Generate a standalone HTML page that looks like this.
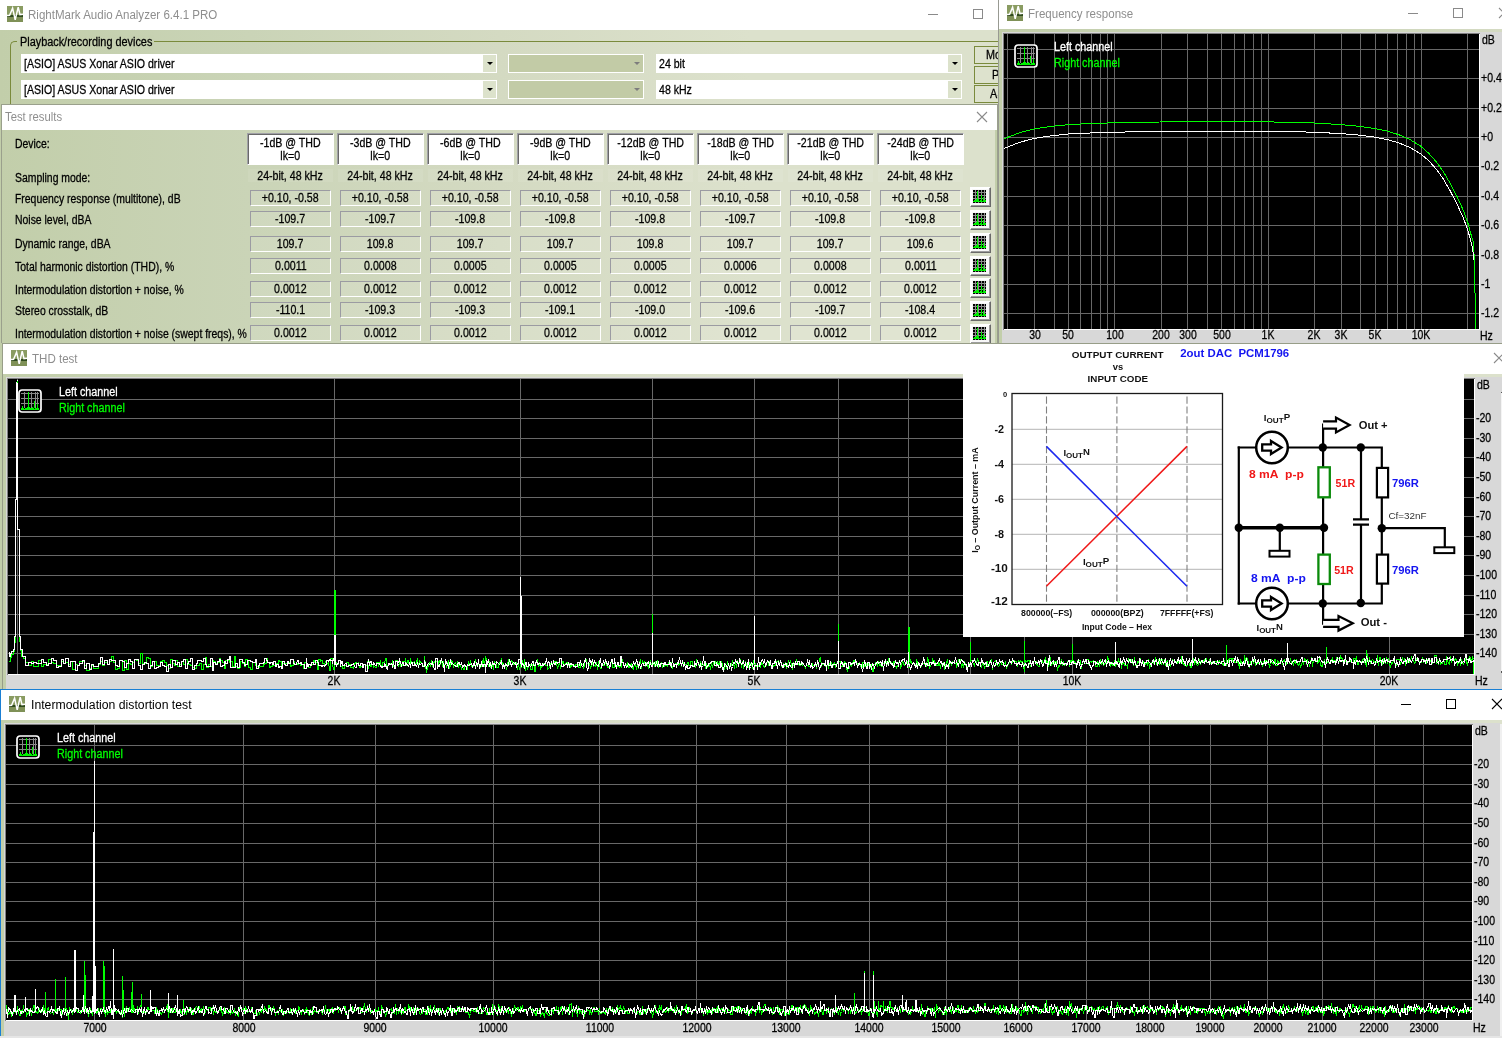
<!DOCTYPE html><html><head><meta charset="utf-8"><title>RightMark Audio Analyzer</title><style>
*{box-sizing:border-box}
html,body{margin:0;padding:0}
body{width:1502px;height:1038px;overflow:hidden;position:relative;background:#fff;
 font-family:"Liberation Sans",sans-serif;font-size:12px;color:#000}
.a{position:absolute}
.t,.tc,.hdr,.val,.smp,.cmb span,.btn{filter:brightness(1)}
.lbl,.pl,.lg,.gl,.hdr,.val,.smp,.cmb span,.btn{-webkit-text-stroke:0.28px currentColor}
.t{position:absolute;white-space:nowrap;line-height:14px;height:14px;transform-origin:0 50%}
.tc{position:absolute;white-space:nowrap;line-height:14px;height:14px;text-align:center}
.ttl{font-size:12px;color:#8e8e8e}
.gbg{background:linear-gradient(90deg,#c2ceaa 0,#cad4b7 250px,#d4dac2 500px,#dce1cc 750px,#dce1cc 100%)}
.hdr{position:absolute;background:#fff;border:1px solid;border-color:#a0a0a6 #fff #fff #a0a0a6;
 box-shadow:inset 1px 1px 0 #696969;text-align:center;line-height:12.5px;font-size:12px;padding-top:3px}
.val{position:absolute;border:1px solid;border-color:#9b9ba2 #fff #fff #9b9ba2;text-align:center;
 font-size:12px;line-height:14px;background:rgba(255,255,255,0.10)}
.smp{position:absolute;text-align:center;font-size:12px;line-height:14px;background:rgba(255,255,255,0.07)}
.gb{position:absolute;width:21px;height:20px;background:#f7f7f7;border:1px solid;border-color:#fff #6a6a6a #6a6a6a #fff;
 box-shadow:inset -1px -1px 0 #9d9d9d, inset 1px 1px 0 #fff}
.cmb{position:absolute;background:#fff;height:19px}
.cmb span{position:absolute;left:3px;top:3px;line-height:14px;white-space:nowrap;transform-origin:0 50%}
.arr{position:absolute;right:1px;top:1px;width:13px;height:17px;background:#dce2cb}
.arr:after{content:"";position:absolute;left:4px;top:7px;border:3px solid transparent;border-top:3px solid #000;border-bottom:none;width:0;height:0}
.btn span{display:inline-block;transform-origin:0 50%;transform:scaleX(0.9)}
.btn{position:absolute;border:1px solid #7a8a3c;background:#dde2cd;font-size:12px;line-height:16px}
.sx{display:inline-block;transform-origin:50% 50%;transform:scaleX(0.885)}
.lbl{transform:scaleX(0.868)}
.pl{transform:scaleX(0.875)}
.lg{transform:scaleX(0.897)}
.tc.pl{transform-origin:50% 50%;transform:scaleX(0.87)}
.ttl{transform:scaleX(0.962)}
.cmb span{transform:scaleX(0.881)}
</style></head><body>
<div class="a" style="left:0;top:0;width:998px;height:30px;background:#fff"></div>
<div class="a gbg" style="left:0;top:30px;width:998px;height:75px"></div>
<svg class="a" style="left:7px;top:6px" width="16" height="16" viewBox="0 0 16 16"><rect width="16" height="16" fill="#8a9c62"/><rect y="9" width="16" height="2.2" fill="#2f4a1c"/><rect y="11.2" width="16" height="4.8" fill="#7f9157"/><path d="M0,9.6 L2.6,9.3 L5.6,2.2 L8.2,13.8 L11.2,1.2 L13,8.6 L16,8.2" fill="none" stroke="#fff" stroke-width="1.5" stroke-linejoin="miter"/></svg>
<div class="t ttl" style="left:28px;top:8px;">RightMark Audio Analyzer 6.4.1 PRO</div>
<svg class="a" style="left:0;top:0" width="1502" height="1038" viewBox="0 0 1502 1038" shape-rendering="crispEdges"><rect x="928" y="14" width="10" height="1" fill="#8a8a8a"/><rect x="973.5" y="9.5" width="9" height="9" fill="none" stroke="#8a8a8a" stroke-width="1"/></svg>
<div class="a" style="left:10px;top:41px;width:1000px;height:80px;border:1px solid #7a8a3c;border-radius:5px 0 0 0;border-right:none;border-bottom:none"></div>
<div class="a" style="left:17px;top:35px;width:137px;height:14px;background:linear-gradient(90deg,#c3ceab,#c6d1b1)"></div>
<div class="t gl" style="left:19.5px;top:35px;transform:scaleX(0.906);">Playback/recording devices</div>
<div class="cmb" style="left:21px;top:54px;width:476px"><span>[ASIO] ASUS Xonar ASIO driver</span><div class="arr"></div></div>
<div class="a" style="left:508px;top:54px;width:136px;height:19px;background:#c2cba6;border:1px solid #fff"></div>
<div class="a" style="left:633.5px;top:62px;width:0;height:0;border:3px solid transparent;border-top:3px solid #7d7d7d;border-bottom:none"></div>
<div class="cmb" style="left:656px;top:54px;width:306px"><span>24 bit</span><div class="arr"></div></div>
<div class="cmb" style="left:21px;top:80px;width:476px"><span>[ASIO] ASUS Xonar ASIO driver</span><div class="arr"></div></div>
<div class="a" style="left:508px;top:80px;width:136px;height:19px;background:#c2cba6;border:1px solid #fff"></div>
<div class="a" style="left:633.5px;top:88px;width:0;height:0;border:3px solid transparent;border-top:3px solid #7d7d7d;border-bottom:none"></div>
<div class="cmb" style="left:656px;top:80px;width:306px"><span>48 kHz</span><div class="arr"></div></div>
<div class="a" style="left:974px;top:46px;width:24px;height:59px;overflow:hidden"><div class="btn" style="left:0;top:0;width:40px;height:18px"><span style="position:absolute;left:11px;top:0">Mo</span></div><div class="btn" style="left:0;top:20px;width:40px;height:18px"><span style="position:absolute;left:17px;top:0">P</span></div><div class="btn" style="left:0;top:39px;width:40px;height:18px"><span style="position:absolute;left:15px;top:0">AS</span></div></div>
<div class="a" style="left:1px;top:104px;width:997px;height:240px;background:#9aa08c"></div>
<div class="a" style="left:2px;top:105px;width:995px;height:25px;background:#fff"></div>
<div class="a gbg" style="left:2px;top:130px;width:995px;height:213px;background-position:-2px 0"></div>
<div class="a" style="left:0;top:104px;width:1px;height:240px;background:#c2ceaa"></div>
<div class="t ttl" style="left:5px;top:110px;transform:scaleX(0.94);">Test results</div>
<svg class="a" style="left:0;top:0" width="1502" height="1038" viewBox="0 0 1502 1038" shape-rendering="crispEdges"></svg>
<svg class="a" style="left:976px;top:111px" width="12" height="12" viewBox="0 0 12 12"><path d="M1,1 L11,11 M11,1 L1,11" stroke="#8a8a8a" stroke-width="1.1" fill="none"/></svg>
<div class="t lbl" style="left:14.5px;top:137px;">Device:</div>
<div class="t lbl" style="left:14.5px;top:171px;">Sampling mode:</div>
<div class="t lbl" style="left:14.5px;top:192px;">Frequency response (multitone), dB</div>
<div class="t lbl" style="left:14.5px;top:213px;">Noise level, dBA</div>
<div class="t lbl" style="left:14.5px;top:237px;">Dynamic range, dBA</div>
<div class="t lbl" style="left:14.5px;top:260px;">Total harmonic distortion (THD), %</div>
<div class="t lbl" style="left:14.5px;top:283px;">Intermodulation distortion + noise, %</div>
<div class="t lbl" style="left:14.5px;top:304px;">Stereo crosstalk, dB</div>
<div class="t lbl" style="left:14.5px;top:327px;">Intermodulation distortion + noise (swept freqs), %</div>
<div class="hdr" style="left:247px;top:133px;width:87px;height:32px"><span class="sx hs">-1dB @ THD</span><br><span class="sx hs">lk=0</span></div>
<div class="smp" style="left:248px;top:169px;width:85px;height:13px"><span class="sx ss">24-bit, 48 kHz</span></div>
<div class="val" style="left:250px;top:190px;width:81px;height:16px"><span class="sx vs">+0.10, -0.58</span></div>
<div class="val" style="left:250px;top:211px;width:81px;height:16px"><span class="sx vs">-109.7</span></div>
<div class="val" style="left:250px;top:236px;width:81px;height:16px"><span class="sx vs">109.7</span></div>
<div class="val" style="left:250px;top:258px;width:81px;height:16px"><span class="sx vs">0.0011</span></div>
<div class="val" style="left:250px;top:281px;width:81px;height:16px"><span class="sx vs">0.0012</span></div>
<div class="val" style="left:250px;top:302px;width:81px;height:16px"><span class="sx vs">-110.1</span></div>
<div class="val" style="left:250px;top:325px;width:81px;height:16px"><span class="sx vs">0.0012</span></div>
<div class="hdr" style="left:337px;top:133px;width:87px;height:32px"><span class="sx hs">-3dB @ THD</span><br><span class="sx hs">lk=0</span></div>
<div class="smp" style="left:338px;top:169px;width:85px;height:13px"><span class="sx ss">24-bit, 48 kHz</span></div>
<div class="val" style="left:340px;top:190px;width:81px;height:16px"><span class="sx vs">+0.10, -0.58</span></div>
<div class="val" style="left:340px;top:211px;width:81px;height:16px"><span class="sx vs">-109.7</span></div>
<div class="val" style="left:340px;top:236px;width:81px;height:16px"><span class="sx vs">109.8</span></div>
<div class="val" style="left:340px;top:258px;width:81px;height:16px"><span class="sx vs">0.0008</span></div>
<div class="val" style="left:340px;top:281px;width:81px;height:16px"><span class="sx vs">0.0012</span></div>
<div class="val" style="left:340px;top:302px;width:81px;height:16px"><span class="sx vs">-109.3</span></div>
<div class="val" style="left:340px;top:325px;width:81px;height:16px"><span class="sx vs">0.0012</span></div>
<div class="hdr" style="left:427px;top:133px;width:87px;height:32px"><span class="sx hs">-6dB @ THD</span><br><span class="sx hs">lk=0</span></div>
<div class="smp" style="left:428px;top:169px;width:85px;height:13px"><span class="sx ss">24-bit, 48 kHz</span></div>
<div class="val" style="left:430px;top:190px;width:81px;height:16px"><span class="sx vs">+0.10, -0.58</span></div>
<div class="val" style="left:430px;top:211px;width:81px;height:16px"><span class="sx vs">-109.8</span></div>
<div class="val" style="left:430px;top:236px;width:81px;height:16px"><span class="sx vs">109.7</span></div>
<div class="val" style="left:430px;top:258px;width:81px;height:16px"><span class="sx vs">0.0005</span></div>
<div class="val" style="left:430px;top:281px;width:81px;height:16px"><span class="sx vs">0.0012</span></div>
<div class="val" style="left:430px;top:302px;width:81px;height:16px"><span class="sx vs">-109.3</span></div>
<div class="val" style="left:430px;top:325px;width:81px;height:16px"><span class="sx vs">0.0012</span></div>
<div class="hdr" style="left:517px;top:133px;width:87px;height:32px"><span class="sx hs">-9dB @ THD</span><br><span class="sx hs">lk=0</span></div>
<div class="smp" style="left:518px;top:169px;width:85px;height:13px"><span class="sx ss">24-bit, 48 kHz</span></div>
<div class="val" style="left:520px;top:190px;width:81px;height:16px"><span class="sx vs">+0.10, -0.58</span></div>
<div class="val" style="left:520px;top:211px;width:81px;height:16px"><span class="sx vs">-109.8</span></div>
<div class="val" style="left:520px;top:236px;width:81px;height:16px"><span class="sx vs">109.7</span></div>
<div class="val" style="left:520px;top:258px;width:81px;height:16px"><span class="sx vs">0.0005</span></div>
<div class="val" style="left:520px;top:281px;width:81px;height:16px"><span class="sx vs">0.0012</span></div>
<div class="val" style="left:520px;top:302px;width:81px;height:16px"><span class="sx vs">-109.1</span></div>
<div class="val" style="left:520px;top:325px;width:81px;height:16px"><span class="sx vs">0.0012</span></div>
<div class="hdr" style="left:607px;top:133px;width:87px;height:32px"><span class="sx hs">-12dB @ THD</span><br><span class="sx hs">lk=0</span></div>
<div class="smp" style="left:608px;top:169px;width:85px;height:13px"><span class="sx ss">24-bit, 48 kHz</span></div>
<div class="val" style="left:610px;top:190px;width:81px;height:16px"><span class="sx vs">+0.10, -0.58</span></div>
<div class="val" style="left:610px;top:211px;width:81px;height:16px"><span class="sx vs">-109.8</span></div>
<div class="val" style="left:610px;top:236px;width:81px;height:16px"><span class="sx vs">109.8</span></div>
<div class="val" style="left:610px;top:258px;width:81px;height:16px"><span class="sx vs">0.0005</span></div>
<div class="val" style="left:610px;top:281px;width:81px;height:16px"><span class="sx vs">0.0012</span></div>
<div class="val" style="left:610px;top:302px;width:81px;height:16px"><span class="sx vs">-109.0</span></div>
<div class="val" style="left:610px;top:325px;width:81px;height:16px"><span class="sx vs">0.0012</span></div>
<div class="hdr" style="left:697px;top:133px;width:87px;height:32px"><span class="sx hs">-18dB @ THD</span><br><span class="sx hs">lk=0</span></div>
<div class="smp" style="left:698px;top:169px;width:85px;height:13px"><span class="sx ss">24-bit, 48 kHz</span></div>
<div class="val" style="left:700px;top:190px;width:81px;height:16px"><span class="sx vs">+0.10, -0.58</span></div>
<div class="val" style="left:700px;top:211px;width:81px;height:16px"><span class="sx vs">-109.7</span></div>
<div class="val" style="left:700px;top:236px;width:81px;height:16px"><span class="sx vs">109.7</span></div>
<div class="val" style="left:700px;top:258px;width:81px;height:16px"><span class="sx vs">0.0006</span></div>
<div class="val" style="left:700px;top:281px;width:81px;height:16px"><span class="sx vs">0.0012</span></div>
<div class="val" style="left:700px;top:302px;width:81px;height:16px"><span class="sx vs">-109.6</span></div>
<div class="val" style="left:700px;top:325px;width:81px;height:16px"><span class="sx vs">0.0012</span></div>
<div class="hdr" style="left:787px;top:133px;width:87px;height:32px"><span class="sx hs">-21dB @ THD</span><br><span class="sx hs">lk=0</span></div>
<div class="smp" style="left:788px;top:169px;width:85px;height:13px"><span class="sx ss">24-bit, 48 kHz</span></div>
<div class="val" style="left:790px;top:190px;width:81px;height:16px"><span class="sx vs">+0.10, -0.58</span></div>
<div class="val" style="left:790px;top:211px;width:81px;height:16px"><span class="sx vs">-109.8</span></div>
<div class="val" style="left:790px;top:236px;width:81px;height:16px"><span class="sx vs">109.7</span></div>
<div class="val" style="left:790px;top:258px;width:81px;height:16px"><span class="sx vs">0.0008</span></div>
<div class="val" style="left:790px;top:281px;width:81px;height:16px"><span class="sx vs">0.0012</span></div>
<div class="val" style="left:790px;top:302px;width:81px;height:16px"><span class="sx vs">-109.7</span></div>
<div class="val" style="left:790px;top:325px;width:81px;height:16px"><span class="sx vs">0.0012</span></div>
<div class="hdr" style="left:877px;top:133px;width:87px;height:32px"><span class="sx hs">-24dB @ THD</span><br><span class="sx hs">lk=0</span></div>
<div class="smp" style="left:878px;top:169px;width:85px;height:13px"><span class="sx ss">24-bit, 48 kHz</span></div>
<div class="val" style="left:880px;top:190px;width:81px;height:16px"><span class="sx vs">+0.10, -0.58</span></div>
<div class="val" style="left:880px;top:211px;width:81px;height:16px"><span class="sx vs">-109.8</span></div>
<div class="val" style="left:880px;top:236px;width:81px;height:16px"><span class="sx vs">109.6</span></div>
<div class="val" style="left:880px;top:258px;width:81px;height:16px"><span class="sx vs">0.0011</span></div>
<div class="val" style="left:880px;top:281px;width:81px;height:16px"><span class="sx vs">0.0012</span></div>
<div class="val" style="left:880px;top:302px;width:81px;height:16px"><span class="sx vs">-108.4</span></div>
<div class="val" style="left:880px;top:325px;width:81px;height:16px"><span class="sx vs">0.0012</span></div>
<div class="gb" style="left:970px;top:187px"><svg class="a" style="left:2px;top:2px" width="13" height="13" viewBox="0 0 13 13" shape-rendering="crispEdges"><rect width="13" height="13" fill="#000"/><path d="M0,2.5H13M0,5.5H13M0,8.5H13M2.5,0V13M5.5,0V13M8.5,0V13M11.5,0V13" stroke="#8e8e8e" stroke-width="1"/><path d="M0,11.5H13M1,10.5H3M4.5,1V12M3.5,9V11M5.5,9V11M8.5,5V12M7.5,10V11M10.5,7V12M11,10.5H13" stroke="#00ee00" stroke-width="1"/></svg></div>
<div class="gb" style="left:970px;top:210px"><svg class="a" style="left:2px;top:2px" width="13" height="13" viewBox="0 0 13 13" shape-rendering="crispEdges"><rect width="13" height="13" fill="#000"/><path d="M0,2.5H13M0,5.5H13M0,8.5H13M2.5,0V13M5.5,0V13M8.5,0V13M11.5,0V13" stroke="#8e8e8e" stroke-width="1"/><path d="M0,11.5H13M1,10.5H3M4.5,1V12M3.5,9V11M5.5,9V11M8.5,5V12M7.5,10V11M10.5,7V12M11,10.5H13" stroke="#00ee00" stroke-width="1"/></svg></div>
<div class="gb" style="left:970px;top:233px"><svg class="a" style="left:2px;top:2px" width="13" height="13" viewBox="0 0 13 13" shape-rendering="crispEdges"><rect width="13" height="13" fill="#000"/><path d="M0,2.5H13M0,5.5H13M0,8.5H13M2.5,0V13M5.5,0V13M8.5,0V13M11.5,0V13" stroke="#8e8e8e" stroke-width="1"/><path d="M0,11.5H13M1,10.5H3M4.5,1V12M3.5,9V11M5.5,9V11M8.5,5V12M7.5,10V11M10.5,7V12M11,10.5H13" stroke="#00ee00" stroke-width="1"/></svg></div>
<div class="gb" style="left:970px;top:256px"><svg class="a" style="left:2px;top:2px" width="13" height="13" viewBox="0 0 13 13" shape-rendering="crispEdges"><rect width="13" height="13" fill="#000"/><path d="M0,2.5H13M0,5.5H13M0,8.5H13M2.5,0V13M5.5,0V13M8.5,0V13M11.5,0V13" stroke="#8e8e8e" stroke-width="1"/><path d="M0,11.5H13M1,10.5H3M4.5,1V12M3.5,9V11M5.5,9V11M8.5,5V12M7.5,10V11M10.5,7V12M11,10.5H13" stroke="#00ee00" stroke-width="1"/></svg></div>
<div class="gb" style="left:970px;top:278px"><svg class="a" style="left:2px;top:2px" width="13" height="13" viewBox="0 0 13 13" shape-rendering="crispEdges"><rect width="13" height="13" fill="#000"/><path d="M0,2.5H13M0,5.5H13M0,8.5H13M2.5,0V13M5.5,0V13M8.5,0V13M11.5,0V13" stroke="#8e8e8e" stroke-width="1"/><path d="M0,11.5H13M1,10.5H3M4.5,1V12M3.5,9V11M5.5,9V11M8.5,5V12M7.5,10V11M10.5,7V12M11,10.5H13" stroke="#00ee00" stroke-width="1"/></svg></div>
<div class="gb" style="left:970px;top:301px"><svg class="a" style="left:2px;top:2px" width="13" height="13" viewBox="0 0 13 13" shape-rendering="crispEdges"><rect width="13" height="13" fill="#000"/><path d="M0,2.5H13M0,5.5H13M0,8.5H13M2.5,0V13M5.5,0V13M8.5,0V13M11.5,0V13" stroke="#8e8e8e" stroke-width="1"/><path d="M0,11.5H13M1,10.5H3M4.5,1V12M3.5,9V11M5.5,9V11M8.5,5V12M7.5,10V11M10.5,7V12M11,10.5H13" stroke="#00ee00" stroke-width="1"/></svg></div>
<div class="gb" style="left:970px;top:324px"><svg class="a" style="left:2px;top:2px" width="13" height="13" viewBox="0 0 13 13" shape-rendering="crispEdges"><rect width="13" height="13" fill="#000"/><path d="M0,2.5H13M0,5.5H13M0,8.5H13M2.5,0V13M5.5,0V13M8.5,0V13M11.5,0V13" stroke="#8e8e8e" stroke-width="1"/><path d="M0,11.5H13M1,10.5H3M4.5,1V12M3.5,9V11M5.5,9V11M8.5,5V12M7.5,10V11M10.5,7V12M11,10.5H13" stroke="#00ee00" stroke-width="1"/></svg></div>
<div class="a gbg" style="left:999px;top:0;width:503px;height:345px"></div>
<div class="a" style="left:998px;top:0;width:1px;height:345px;background:#989a92"></div>
<div class="a" style="left:999px;top:0;width:503px;height:29px;background:#fff"></div>
<svg class="a" style="left:1007px;top:5px" width="16" height="16" viewBox="0 0 16 16"><rect width="16" height="16" fill="#8a9c62"/><rect y="9" width="16" height="2.2" fill="#2f4a1c"/><rect y="11.2" width="16" height="4.8" fill="#7f9157"/><path d="M0,9.6 L2.6,9.3 L5.6,2.2 L8.2,13.8 L11.2,1.2 L13,8.6 L16,8.2" fill="none" stroke="#fff" stroke-width="1.5" stroke-linejoin="miter"/></svg>
<div class="t ttl" style="left:1028px;top:7px;">Frequency response</div>
<svg class="a" style="left:0;top:0" width="1502" height="1038" viewBox="0 0 1502 1038" shape-rendering="crispEdges"><rect x="1408" y="13" width="10" height="1" fill="#8a8a8a"/><rect x="1453.5" y="8.5" width="9" height="9" fill="none" stroke="#8a8a8a" stroke-width="1"/></svg>
<svg class="a" style="left:1498px;top:7px" width="12" height="12" viewBox="0 0 12 12"><path d="M1,1 L11,11 M11,1 L1,11" stroke="#8a8a8a" stroke-width="1.1" fill="none"/></svg>
<div class="a" style="left:1002px;top:32px;width:500px;height:312px;background:#d8d8d8"></div>
<div class="a" style="left:1003px;top:33px;width:477px;height:297px;background:#fff;border-left:1px solid #808080;border-top:1px solid #808080"></div>
<div class="a" style="left:998px;top:343px;width:504px;height:1px;background:#9b9b9b"></div>
<svg class="a" style="left:1004px;top:34px" width="475" height="295" viewBox="1004 34 475 295" ><rect x="1004" y="34" width="475" height="295" fill="#000"/><g stroke="#686868" stroke-width="1" shape-rendering="crispEdges"><line x1="1007.5" y1="34" x2="1007.5" y2="329"/><line x1="1034.5" y1="34" x2="1034.5" y2="329"/><line x1="1054.5" y1="34" x2="1054.5" y2="329"/><line x1="1068.5" y1="34" x2="1068.5" y2="329"/><line x1="1080.5" y1="34" x2="1080.5" y2="329"/><line x1="1091.5" y1="34" x2="1091.5" y2="329"/><line x1="1100.5" y1="34" x2="1100.5" y2="329"/><line x1="1107.5" y1="34" x2="1107.5" y2="329"/><line x1="1114.5" y1="34" x2="1114.5" y2="329"/><line x1="1161.5" y1="34" x2="1161.5" y2="329"/><line x1="1187.5" y1="34" x2="1187.5" y2="329"/><line x1="1207.5" y1="34" x2="1207.5" y2="329"/><line x1="1221.5" y1="34" x2="1221.5" y2="329"/><line x1="1234.5" y1="34" x2="1234.5" y2="329"/><line x1="1244.5" y1="34" x2="1244.5" y2="329"/><line x1="1253.5" y1="34" x2="1253.5" y2="329"/><line x1="1261.5" y1="34" x2="1261.5" y2="329"/><line x1="1268.5" y1="34" x2="1268.5" y2="329"/><line x1="1314.5" y1="34" x2="1314.5" y2="329"/><line x1="1341.5" y1="34" x2="1341.5" y2="329"/><line x1="1360.5" y1="34" x2="1360.5" y2="329"/><line x1="1375.5" y1="34" x2="1375.5" y2="329"/><line x1="1387.5" y1="34" x2="1387.5" y2="329"/><line x1="1397.5" y1="34" x2="1397.5" y2="329"/><line x1="1406.5" y1="34" x2="1406.5" y2="329"/><line x1="1414.5" y1="34" x2="1414.5" y2="329"/><line x1="1421.5" y1="34" x2="1421.5" y2="329"/><line x1="1467.5" y1="34" x2="1467.5" y2="329"/><line x1="1004" y1="49.5" x2="1479" y2="49.5"/><line x1="1004" y1="78.5" x2="1479" y2="78.5"/><line x1="1004" y1="108.5" x2="1479" y2="108.5"/><line x1="1004" y1="137.5" x2="1479" y2="137.5"/><line x1="1004" y1="166.5" x2="1479" y2="166.5"/><line x1="1004" y1="196.5" x2="1479" y2="196.5"/><line x1="1004" y1="225.5" x2="1479" y2="225.5"/><line x1="1004" y1="255.5" x2="1479" y2="255.5"/><line x1="1004" y1="284.5" x2="1479" y2="284.5"/><line x1="1004" y1="313.5" x2="1479" y2="313.5"/></g><polyline points="1004.0,139.0 1010.0,136.4 1020.0,132.6 1034.0,128.9 1050.0,126.5 1068.0,124.7 1090.0,123.5 1114.0,122.8 1140.0,122.3 1160.0,122.0 1200.0,121.9 1268.0,121.9 1290.0,122.3 1314.0,123.0 1341.0,124.6 1360.0,126.4 1375.0,128.6 1388.0,131.3 1399.0,134.8 1410.0,139.6 1421.0,146.4 1429.0,153.6 1436.5,162.0 1443.0,171.2 1450.0,183.0 1457.0,196.5 1463.8,211.5 1468.0,223.5 1470.6,233.0 1473.2,242.0 1474.0,254.0 1474.6,275.0 1475.2,300.0 1475.5,329.0" fill="none" stroke="#00ff00" stroke-width="1" shape-rendering="crispEdges"/><polyline points="1004.0,148.6 1010.0,146.0 1020.0,142.2 1034.3,138.4 1050.0,136.0 1068.4,134.0 1090.0,133.0 1114.4,132.3 1140.0,131.6 1160.4,131.3 1200.0,131.2 1267.8,131.2 1290.0,131.6 1313.8,132.2 1341.0,133.6 1360.0,135.2 1375.0,137.2 1388.0,139.8 1399.0,143.0 1410.0,147.5 1421.0,154.0 1429.0,161.0 1436.5,169.4 1443.0,178.5 1450.0,190.5 1457.0,204.0 1463.8,219.0 1468.0,231.0 1470.6,240.0 1472.6,248.0 1473.8,260.0" fill="none" stroke="#fff" stroke-width="1" shape-rendering="crispEdges"/></svg>
<svg class="a" style="left:1014px;top:44px" width="24" height="24" viewBox="0 0 24 24"><rect x="1" y="1" width="22" height="22" rx="3" fill="#000" stroke="#fff" stroke-width="1.7"/><g shape-rendering="crispEdges"><path d="M3,4.5H21M3,9.5H21M3,14.5H21M6.5,3V19M13.5,3V19M17.5,3V19M19.5,3V15" stroke="#8a8a8a" stroke-width="1"/><path d="M10.5,3V19M16.5,12V19M19.5,15V19" stroke="#00f400" stroke-width="1.2"/><path d="M3,21 V19 H4 V17 H5 V19 H6 V20 H7 V19 H9 V17.5 H12 V19 H14 V18 H15 V19 H16 V20 H17 V19 H21 V21 Z" fill="#00f400"/></g></svg>
<div class="t lg" style="left:1054px;top:40px;color:#fff;font-size:12px;">Left channel</div>
<div class="t lg" style="left:1054px;top:56px;color:#00ff00;font-size:12px;">Right channel</div>
<div class="t pl" style="left:1481.6px;top:33px;font-size:12px;">dB</div>
<div class="t pl" style="left:1480.5px;top:71.0px;font-size:12px;">+0.4</div>
<div class="t pl" style="left:1480.5px;top:101.0px;font-size:12px;">+0.2</div>
<div class="t pl" style="left:1480.5px;top:130.0px;font-size:12px;">+0</div>
<div class="t pl" style="left:1480.5px;top:159.0px;font-size:12px;">-0.2</div>
<div class="t pl" style="left:1480.5px;top:189.0px;font-size:12px;">-0.4</div>
<div class="t pl" style="left:1480.5px;top:218.0px;font-size:12px;">-0.6</div>
<div class="t pl" style="left:1480.5px;top:248.0px;font-size:12px;">-0.8</div>
<div class="t pl" style="left:1480.5px;top:277.0px;font-size:12px;">-1</div>
<div class="t pl" style="left:1480.5px;top:306.0px;font-size:12px;">-1.2</div>
<div class="tc pl" style="left:1004.5077216724858px;width:60px;top:328.3px;font-size:12px;">30</div>
<div class="tc pl" style="left:1038.4683282637577px;width:60px;top:328.3px;font-size:12px;">50</div>
<div class="tc pl" style="left:1084.55px;width:60px;top:328.3px;font-size:12px;">100</div>
<div class="tc pl" style="left:1130.6316717362422px;width:60px;top:328.3px;font-size:12px;">200</div>
<div class="tc pl" style="left:1157.587721672486px;width:60px;top:328.3px;font-size:12px;">300</div>
<div class="tc pl" style="left:1191.5483282637576px;width:60px;top:328.3px;font-size:12px;">500</div>
<div class="tc pl" style="left:1237.6299999999999px;width:60px;top:328.3px;font-size:12px;">1K</div>
<div class="tc pl" style="left:1283.7116717362421px;width:60px;top:328.3px;font-size:12px;">2K</div>
<div class="tc pl" style="left:1310.6677216724859px;width:60px;top:328.3px;font-size:12px;">3K</div>
<div class="tc pl" style="left:1344.6283282637578px;width:60px;top:328.3px;font-size:12px;">5K</div>
<div class="tc pl" style="left:1390.71px;width:60px;top:328.3px;font-size:12px;">10K</div>
<div class="t pl" style="left:1479.5px;top:329px;font-size:12px;">Hz</div>
<div class="a" style="left:0;top:343px;width:2px;height:346px;background:#c2ceaa"></div>
<div class="a" style="left:2px;top:343px;width:1500px;height:346px;background:#979d88"></div>
<div class="a" style="left:3px;top:344px;width:1499px;height:345px;background:linear-gradient(90deg,#c2ceaa 0,#cad4b7 250px,#d4dac2 500px,#dce1cc 750px,#dce1cc 100%)"></div>
<div class="a" style="left:3px;top:344px;width:1499px;height:30px;background:#fff"></div>
<svg class="a" style="left:11px;top:350px" width="16" height="16" viewBox="0 0 16 16"><rect width="16" height="16" fill="#8a9c62"/><rect y="9" width="16" height="2.2" fill="#2f4a1c"/><rect y="11.2" width="16" height="4.8" fill="#7f9157"/><path d="M0,9.6 L2.6,9.3 L5.6,2.2 L8.2,13.8 L11.2,1.2 L13,8.6 L16,8.2" fill="none" stroke="#fff" stroke-width="1.5" stroke-linejoin="miter"/></svg>
<div class="t ttl" style="left:32px;top:351.5px;">THD test</div>
<svg class="a" style="left:0;top:0" width="1502" height="1038" viewBox="0 0 1502 1038" shape-rendering="crispEdges"></svg>
<svg class="a" style="left:1493px;top:352px" width="12" height="12" viewBox="0 0 12 12"><path d="M1,1 L11,11 M11,1 L1,11" stroke="#8a8a8a" stroke-width="1.1" fill="none"/></svg>
<div class="a" style="left:6px;top:377px;width:1496px;height:312px;background:#d8d8d8"></div>
<div class="a" style="left:7px;top:378px;width:1468px;height:297px;background:#fff;border-left:1px solid #808080;border-top:1px solid #808080"></div>
<svg class="a" style="left:8px;top:379px" width="1466" height="295" viewBox="8 379 1466 295" ><rect x="8" y="379" width="1466" height="295" fill="#000"/><g stroke="#686868" stroke-width="1" shape-rendering="crispEdges"><line x1="17.5" y1="379" x2="17.5" y2="674"/><line x1="334.5" y1="379" x2="334.5" y2="674"/><line x1="520.5" y1="379" x2="520.5" y2="674"/><line x1="652.5" y1="379" x2="652.5" y2="674"/><line x1="754.5" y1="379" x2="754.5" y2="674"/><line x1="838.5" y1="379" x2="838.5" y2="674"/><line x1="908.5" y1="379" x2="908.5" y2="674"/><line x1="970.5" y1="379" x2="970.5" y2="674"/><line x1="1024.5" y1="379" x2="1024.5" y2="674"/><line x1="1072.5" y1="379" x2="1072.5" y2="674"/><line x1="1389.5" y1="379" x2="1389.5" y2="674"/><line x1="8" y1="399.5" x2="1474" y2="399.5"/><line x1="8" y1="418.5" x2="1474" y2="418.5"/><line x1="8" y1="438.5" x2="1474" y2="438.5"/><line x1="8" y1="457.5" x2="1474" y2="457.5"/><line x1="8" y1="477.5" x2="1474" y2="477.5"/><line x1="8" y1="497.5" x2="1474" y2="497.5"/><line x1="8" y1="516.5" x2="1474" y2="516.5"/><line x1="8" y1="536.5" x2="1474" y2="536.5"/><line x1="8" y1="555.5" x2="1474" y2="555.5"/><line x1="8" y1="575.5" x2="1474" y2="575.5"/><line x1="8" y1="595.5" x2="1474" y2="595.5"/><line x1="8" y1="614.5" x2="1474" y2="614.5"/><line x1="8" y1="634.5" x2="1474" y2="634.5"/><line x1="8" y1="653.5" x2="1474" y2="653.5"/></g><g fill="none" shape-rendering="crispEdges"><path d="M8.5,661.5H9.5H10.5V657.5H11.5V654.5H13.5V651.5H14.5V642.5H15.5V636.5" stroke="#00ff00" stroke-width="1"/><path d="M19.5,636.5V641.5H20.5V650.5H21.5V656.5H23.5V658.5" stroke="#00ff00" stroke-width="1"/><path d="M22.5,658.5H25.5V662.5H28.5V665.5H31.5V661.5H33.5V666.5H38.5V660.5H41.5V666.5H43.5V664.5H48.5V659.5H51.5V662.5H53.5V663.5H56.5V665.5H61.5V661.5H63.5V663.5H65.5V662.5H68.5V664.5H70.5V661.5H72.5V669.5H75.5V664.5H77.5V665.5H79.5V661.5H84.5V665.5H86.5V670.5H89.5V668.5H91.5V665.5H93.5V668.5H98.5V664.5H100.5V661.5H102.5V665.5H104.5V662.5H107.5V664.5H109.5V661.5H111.5V656.5H113.5V662.5H115.5V669.5H117.5V668.5H119.5V660.5H122.5V670.5H124.5V660.5H126.5V669.5H128.5V663.5H130.5V664.5H132.5V662.5H134.5V659.5H136.5V660.5H138.5V663.5H140.5V653.5H142.5V663.5H146.5V657.5H148.5V658.5H150.5V666.5H152.5V661.5H156.5V665.5H160.5V661.5H162.5V660.5H164.5V662.5H166.5V665.5H168.5V668.5H170.5V659.5H172.5V663.5H174.5V665.5H175.5V660.5H177.5V666.5H179.5V664.5H181.5V661.5H183.5V664.5H185.5V659.5H187.5V663.5H188.5V664.5H190.5V665.5H192.5V667.5H194.5V668.5H196.5V665.5H199.5V663.5H201.5V669.5H203.5V664.5H205.5V657.5H206.5V667.5H208.5V664.5H210.5V666.5H212.5V660.5H213.5V661.5H215.5V663.5H217.5V662.5H219.5V658.5H220.5V660.5H222.5V662.5H224.5V668.5H225.5V660.5H229.5V662.5H230.5V661.5H232.5V666.5H234.5V656.5H235.5V666.5H237.5V668.5H239.5V667.5H240.5V661.5H242.5V663.5H244.5V666.5H245.5V659.5H247.5V661.5H248.5V667.5H250.5V669.5H252.5V662.5H255.5V665.5H256.5V666.5H258.5V667.5H259.5V666.5H263.5V664.5H264.5V663.5H266.5V658.5H267.5V662.5H269.5V667.5H270.5V666.5H272.5V662.5H273.5V665.5H275.5V664.5H276.5V663.5H278.5V660.5H279.5V661.5H281.5V668.5H282.5V663.5H287.5V662.5H290.5V666.5H291.5V665.5H293.5V661.5H294.5V664.5H296.5V662.5L297.5,664.5H298.5V663.5H300.5V665.5H301.5V664.5H303.5V668.5H304.5V662.5H306.5V664.5L307.5,665.5H308.5V667.5H310.5V665.5H311.5V664.5H313.5V660.5H314.5V662.5H317.5V669.5H318.5V659.5H320.5V661.5L321.5,660.5H322.5V663.5H324.5V664.5L325.5,661.5H326.5V663.5H328.5V661.5L329.5,670.5H330.5V658.5H332.5V664.5L333.5,669.5H334.5V664.5H336.5V662.5L337.5,664.5H338.5V660.5H340.5V665.5L341.5,666.5H342.5V668.5H344.5V664.5L345.5,665.5H346.5V662.5H348.5V664.5H350.5V667.5H353.5V668.5L354.5,664.5L355.5,662.5H356.5V663.5H358.5V662.5L359.5,667.5H360.5V666.5H362.5V664.5L363.5,665.5L364.5,664.5H365.5V665.5H367.5V661.5L368.5,668.5L369.5,661.5L370.5,666.5H371.5V664.5H373.5V667.5L374.5,666.5L375.5,667.5H376.5V662.5H378.5V666.5L379.5,663.5L380.5,661.5L381.5,667.5H382.5V662.5H384.5V664.5L385.5,658.5H386.5V665.5H388.5V664.5H389.5V663.5H392.5V660.5L393.5,666.5L394.5,665.5H395.5V660.5H397.5V662.5L398.5,666.5L399.5,662.5L400.5,666.5L401.5,665.5H402.5V661.5H405.5V658.5L406.5,665.5L407.5,660.5H408.5V663.5H410.5V658.5L411.5,663.5H412.5V662.5H414.5V661.5L415.5,665.5L416.5,661.5L417.5,659.5L418.5,665.5L419.5,660.5L420.5,661.5L421.5,663.5H422.5V665.5H424.5V656.5L425.5,665.5L426.5,672.5L427.5,667.5L428.5,665.5L429.5,663.5L430.5,665.5L431.5,660.5L432.5,666.5L433.5,662.5H434.5V661.5H438.5V664.5L439.5,661.5L440.5,663.5L441.5,658.5L442.5,666.5L443.5,662.5L444.5,665.5L445.5,663.5L446.5,666.5L447.5,663.5L448.5,660.5L449.5,668.5L450.5,664.5L451.5,660.5L452.5,661.5L453.5,667.5L454.5,663.5L455.5,662.5L456.5,665.5L457.5,662.5L458.5,666.5L459.5,664.5L460.5,665.5L461.5,668.5L462.5,666.5L463.5,669.5H464.5V666.5H467.5V669.5L468.5,661.5L469.5,665.5L470.5,660.5L471.5,666.5L472.5,665.5L473.5,666.5L474.5,663.5L475.5,660.5L476.5,665.5H477.5V664.5H480.5V667.5L481.5,666.5L482.5,661.5L483.5,659.5L484.5,666.5L485.5,656.5L486.5,659.5L487.5,663.5L488.5,665.5L489.5,662.5L490.5,666.5L491.5,664.5L492.5,663.5L493.5,669.5L494.5,661.5L495.5,662.5H496.5V667.5H498.5V665.5L499.5,663.5L500.5,661.5L501.5,658.5L502.5,664.5L503.5,663.5L504.5,667.5L505.5,663.5L506.5,669.5L507.5,664.5L508.5,660.5L509.5,663.5L510.5,661.5L511.5,660.5L512.5,662.5L513.5,664.5H514.5V662.5H516.5V665.5L517.5,668.5L518.5,663.5L519.5,669.5L520.5,664.5L521.5,666.5L522.5,660.5L523.5,667.5L524.5,659.5L525.5,670.5L526.5,662.5L527.5,668.5L528.5,666.5L529.5,664.5H530.5V669.5H532.5V664.5H534.5V671.5H535.5V662.5H537.5V659.5L538.5,665.5L539.5,663.5L540.5,668.5L541.5,666.5H542.5V663.5H545.5V665.5H547.5V669.5L548.5,668.5L549.5,667.5L550.5,664.5L551.5,662.5L552.5,664.5L553.5,662.5H554.5V661.5H556.5V664.5L557.5,667.5L558.5,665.5L559.5,662.5L560.5,667.5L561.5,665.5L562.5,661.5H563.5V664.5H565.5V663.5L566.5,662.5H567.5V665.5H569.5V663.5L570.5,667.5L571.5,666.5L572.5,664.5H573.5V665.5H575.5V664.5H578.5V667.5H580.5V663.5H581.5V664.5H583.5V668.5L584.5,664.5L585.5,659.5H586.5V663.5H588.5V667.5L589.5,664.5L590.5,667.5L591.5,665.5L592.5,662.5L593.5,666.5L594.5,665.5L595.5,666.5L596.5,662.5L597.5,669.5L598.5,661.5L599.5,665.5L600.5,668.5H601.5V665.5H603.5V664.5L604.5,665.5L605.5,662.5L606.5,663.5L607.5,667.5H608.5V666.5H610.5V664.5L611.5,661.5H612.5V667.5H614.5V663.5L615.5,664.5L616.5,665.5H617.5V666.5H619.5V667.5L620.5,666.5L621.5,667.5L622.5,659.5L623.5,664.5L624.5,665.5L625.5,664.5L626.5,665.5L627.5,663.5L628.5,667.5H629.5V664.5H631.5V663.5L632.5,668.5L633.5,669.5L634.5,663.5L635.5,664.5L636.5,668.5L637.5,665.5L638.5,667.5L639.5,663.5L640.5,659.5L641.5,668.5L642.5,660.5L643.5,664.5L644.5,662.5L645.5,665.5L646.5,663.5L647.5,665.5L648.5,667.5L649.5,663.5L650.5,661.5L651.5,664.5L652.5,663.5L653.5,662.5L654.5,666.5L655.5,661.5L656.5,665.5L657.5,660.5L658.5,666.5L659.5,664.5L660.5,663.5L661.5,662.5L662.5,667.5L663.5,666.5H664.5V665.5H667.5V666.5L668.5,663.5L669.5,661.5L670.5,666.5L671.5,662.5L672.5,668.5L673.5,664.5L674.5,665.5L675.5,663.5H676.5V664.5H678.5V665.5L679.5,663.5L680.5,662.5L681.5,665.5L682.5,661.5L683.5,663.5L684.5,665.5L685.5,664.5L686.5,665.5L687.5,662.5H688.5V665.5H690.5V661.5H692.5V665.5L693.5,666.5L694.5,664.5L695.5,666.5L696.5,660.5L697.5,662.5L698.5,663.5L699.5,667.5L700.5,661.5L701.5,665.5L702.5,662.5L703.5,665.5L704.5,664.5L705.5,667.5L706.5,664.5L707.5,667.5L708.5,666.5L709.5,664.5L710.5,669.5L711.5,662.5L712.5,667.5L713.5,662.5L714.5,664.5L715.5,662.5L716.5,665.5L717.5,661.5L718.5,665.5L719.5,662.5L720.5,666.5L721.5,662.5L722.5,664.5L723.5,670.5L724.5,669.5L725.5,664.5L726.5,667.5L727.5,662.5L728.5,664.5L729.5,665.5L730.5,666.5L731.5,664.5L732.5,661.5L733.5,663.5L734.5,668.5L735.5,662.5L736.5,667.5L737.5,660.5L738.5,664.5L739.5,662.5L740.5,659.5L741.5,667.5L742.5,661.5L743.5,667.5L744.5,665.5L745.5,662.5L746.5,664.5L747.5,666.5L748.5,667.5L749.5,662.5L750.5,663.5L751.5,662.5L752.5,668.5L753.5,661.5L754.5,663.5H755.5V666.5H757.5V667.5L758.5,666.5L759.5,663.5L760.5,667.5L761.5,662.5L762.5,663.5L763.5,666.5L764.5,667.5L765.5,664.5L766.5,665.5L767.5,661.5L768.5,664.5L769.5,662.5L770.5,665.5L771.5,666.5L772.5,664.5L773.5,666.5L774.5,665.5H775.5V661.5H778.5V660.5L779.5,663.5L780.5,662.5H781.5V666.5H783.5V663.5L784.5,665.5L785.5,663.5L786.5,667.5L787.5,664.5L788.5,661.5L789.5,664.5L790.5,661.5L791.5,664.5L792.5,669.5L793.5,663.5L794.5,665.5L795.5,663.5L796.5,660.5L797.5,662.5L798.5,664.5L799.5,665.5H800.5V663.5H802.5V665.5L803.5,664.5L804.5,665.5L805.5,667.5L806.5,664.5L807.5,665.5H808.5V666.5H811.5V663.5H812.5V665.5H814.5V666.5L815.5,664.5L816.5,667.5L817.5,663.5L818.5,665.5L819.5,658.5L820.5,657.5L821.5,665.5L822.5,663.5H823.5V664.5H825.5V666.5L826.5,667.5L827.5,663.5L828.5,668.5L829.5,663.5L830.5,662.5H831.5V665.5H833.5V663.5L834.5,662.5L835.5,666.5L836.5,664.5L837.5,662.5H838.5V661.5H840.5V666.5H842.5V664.5L843.5,665.5L844.5,661.5L845.5,662.5L846.5,667.5L847.5,671.5L848.5,662.5L849.5,668.5L850.5,663.5L851.5,665.5L852.5,663.5L853.5,660.5H854.5V661.5H856.5V662.5L857.5,664.5L858.5,665.5L859.5,663.5L860.5,666.5L861.5,667.5H862.5V662.5H864.5V666.5H866.5V663.5H868.5V665.5H869.5V667.5H871.5V664.5L872.5,671.5H873.5V664.5H875.5V662.5L876.5,663.5L877.5,665.5L878.5,661.5L879.5,665.5L880.5,664.5L881.5,666.5H882.5V663.5H884.5V665.5L885.5,661.5H886.5V664.5H888.5V658.5H889.5V662.5H891.5V664.5H893.5V661.5H894.5V666.5H896.5V668.5L897.5,665.5H898.5V662.5H900.5V668.5L901.5,665.5L902.5,660.5L903.5,663.5L904.5,665.5L905.5,664.5L906.5,661.5H907.5V667.5H909.5V666.5L910.5,659.5L911.5,663.5L912.5,664.5L913.5,663.5H914.5V664.5H916.5V659.5L917.5,663.5L918.5,665.5L919.5,664.5L920.5,665.5L921.5,666.5L922.5,662.5L923.5,663.5L924.5,664.5L925.5,663.5L926.5,666.5L927.5,658.5L928.5,660.5L929.5,668.5L930.5,665.5L931.5,664.5L932.5,659.5L933.5,661.5L934.5,660.5L935.5,664.5H936.5V665.5H938.5V662.5L939.5,663.5L940.5,668.5L941.5,662.5L942.5,663.5L943.5,662.5L944.5,668.5L945.5,666.5L946.5,662.5L947.5,659.5L948.5,666.5H949.5V663.5H951.5V665.5L952.5,661.5L953.5,662.5H954.5V663.5H956.5V667.5L957.5,664.5L958.5,660.5L959.5,662.5L960.5,660.5L961.5,667.5L962.5,664.5L963.5,666.5L964.5,661.5L965.5,665.5L966.5,664.5L967.5,667.5L968.5,664.5L969.5,663.5H970.5V660.5H972.5V662.5L973.5,663.5L974.5,666.5L975.5,660.5L976.5,664.5L977.5,658.5L978.5,662.5L979.5,663.5L980.5,662.5L981.5,667.5L982.5,662.5L983.5,664.5L984.5,667.5L985.5,665.5L986.5,661.5H987.5V665.5H989.5V661.5L990.5,662.5L991.5,660.5L992.5,669.5L993.5,662.5L994.5,661.5L995.5,660.5L996.5,663.5L997.5,665.5L998.5,666.5L999.5,665.5L1000.5,661.5H1001.5V664.5H1003.5V663.5H1005.5V661.5L1006.5,668.5L1007.5,664.5H1008.5V662.5H1010.5V661.5L1011.5,663.5L1012.5,661.5L1013.5,660.5H1014.5V661.5H1016.5V665.5L1017.5,666.5L1018.5,660.5L1019.5,661.5L1020.5,660.5L1021.5,662.5L1022.5,661.5L1023.5,665.5L1024.5,671.5L1025.5,660.5L1026.5,661.5H1027.5V660.5H1029.5V663.5L1030.5,666.5L1031.5,665.5L1032.5,662.5H1033.5V661.5H1036.5V663.5L1037.5,665.5L1038.5,666.5H1039.5V661.5H1042.5V660.5L1043.5,664.5L1044.5,660.5L1045.5,658.5L1046.5,662.5L1047.5,661.5L1048.5,665.5L1049.5,663.5L1050.5,657.5L1051.5,665.5L1052.5,662.5L1053.5,664.5H1054.5V661.5H1056.5V662.5L1057.5,670.5L1058.5,665.5L1059.5,666.5L1060.5,663.5L1061.5,659.5L1062.5,665.5L1063.5,661.5L1064.5,665.5L1065.5,664.5L1066.5,663.5H1067.5V661.5H1069.5V666.5L1070.5,660.5H1071.5V662.5H1073.5V660.5L1074.5,662.5H1075.5V664.5H1077.5V660.5H1080.5V661.5L1081.5,668.5L1082.5,662.5L1083.5,660.5L1084.5,662.5L1085.5,663.5H1086.5V659.5H1088.5V664.5H1089.5V661.5H1091.5V662.5L1092.5,661.5L1093.5,660.5L1094.5,662.5H1095.5V666.5H1097.5V661.5L1098.5,662.5L1099.5,666.5L1100.5,659.5L1101.5,663.5L1102.5,661.5L1103.5,665.5L1104.5,664.5L1105.5,662.5L1106.5,664.5L1107.5,656.5L1108.5,660.5L1109.5,662.5L1110.5,666.5L1111.5,662.5H1112.5V665.5H1114.5V660.5L1115.5,666.5L1116.5,662.5L1117.5,663.5L1118.5,658.5L1119.5,664.5L1120.5,658.5L1121.5,668.5L1122.5,661.5L1123.5,663.5H1124.5V665.5H1127.5V668.5L1128.5,659.5L1129.5,661.5L1130.5,662.5L1131.5,660.5L1132.5,662.5L1133.5,665.5L1134.5,657.5L1135.5,664.5L1136.5,666.5L1137.5,661.5L1138.5,662.5L1139.5,659.5L1140.5,658.5L1141.5,664.5L1142.5,661.5H1143.5V664.5H1145.5V662.5L1146.5,661.5L1147.5,665.5L1148.5,659.5L1149.5,668.5L1150.5,664.5H1151.5V662.5H1153.5V663.5L1154.5,662.5L1155.5,657.5L1156.5,664.5L1157.5,665.5L1158.5,659.5L1159.5,663.5L1160.5,660.5L1161.5,663.5L1162.5,660.5L1163.5,664.5L1164.5,659.5L1165.5,665.5L1166.5,661.5L1167.5,660.5L1168.5,666.5L1169.5,662.5L1170.5,665.5L1171.5,662.5L1172.5,659.5L1173.5,660.5H1174.5V661.5H1176.5V662.5L1177.5,663.5L1178.5,661.5L1179.5,663.5L1180.5,662.5L1181.5,656.5L1182.5,662.5L1183.5,664.5H1184.5V665.5H1186.5V666.5L1187.5,664.5L1188.5,661.5L1189.5,664.5L1190.5,667.5H1191.5V662.5H1193.5V658.5L1194.5,663.5L1195.5,660.5L1196.5,664.5L1197.5,665.5L1198.5,664.5L1199.5,659.5L1200.5,663.5L1201.5,661.5L1202.5,662.5L1203.5,661.5L1204.5,659.5L1205.5,658.5H1206.5V662.5H1209.5V659.5L1210.5,663.5L1211.5,662.5L1212.5,661.5L1213.5,663.5L1214.5,662.5L1215.5,661.5H1216.5V664.5H1218.5V661.5L1219.5,660.5L1220.5,663.5L1221.5,662.5L1222.5,664.5L1223.5,665.5L1224.5,660.5L1225.5,665.5H1226.5V662.5H1228.5V659.5H1229.5V658.5H1231.5V661.5H1232.5V658.5H1234.5V662.5H1237.5V660.5L1238.5,662.5L1239.5,668.5L1240.5,659.5L1241.5,663.5H1242.5V662.5H1244.5V655.5L1245.5,660.5L1246.5,657.5L1247.5,658.5L1248.5,663.5L1249.5,666.5L1250.5,662.5L1251.5,665.5L1252.5,659.5L1253.5,662.5L1254.5,658.5L1255.5,664.5L1256.5,662.5L1257.5,663.5H1258.5V662.5H1260.5V660.5L1261.5,662.5L1262.5,665.5L1263.5,663.5L1264.5,658.5L1265.5,662.5L1266.5,660.5L1267.5,661.5L1268.5,662.5L1269.5,666.5L1270.5,664.5L1271.5,660.5L1272.5,663.5L1273.5,664.5L1274.5,659.5H1275.5V665.5H1277.5V660.5L1278.5,661.5L1279.5,663.5L1280.5,662.5L1281.5,659.5L1282.5,663.5L1283.5,660.5L1284.5,659.5L1285.5,664.5H1286.5V658.5H1288.5V660.5L1289.5,662.5L1290.5,659.5L1291.5,662.5L1292.5,661.5L1293.5,665.5L1294.5,660.5L1295.5,662.5L1296.5,660.5L1297.5,664.5L1298.5,665.5L1299.5,663.5L1300.5,666.5L1301.5,664.5L1302.5,661.5L1303.5,663.5L1304.5,658.5L1305.5,659.5L1306.5,664.5L1307.5,660.5L1308.5,662.5L1309.5,665.5L1310.5,662.5L1311.5,657.5L1312.5,666.5L1313.5,660.5L1314.5,659.5H1315.5V660.5H1317.5V663.5L1318.5,661.5L1319.5,659.5L1320.5,664.5L1321.5,666.5H1322.5V661.5H1324.5V659.5L1325.5,664.5L1326.5,659.5L1327.5,662.5L1328.5,661.5L1329.5,663.5L1330.5,662.5L1331.5,660.5L1332.5,658.5L1333.5,662.5H1334.5V660.5H1336.5V657.5H1337.5V658.5H1339.5V661.5L1340.5,656.5L1341.5,658.5H1342.5V661.5H1345.5V660.5H1346.5V662.5H1348.5V661.5H1350.5V660.5L1351.5,661.5L1352.5,662.5H1353.5V658.5H1355.5V661.5L1356.5,656.5L1357.5,664.5H1358.5V661.5H1361.5V662.5L1362.5,659.5L1363.5,658.5L1364.5,661.5L1365.5,663.5L1366.5,665.5L1367.5,654.5L1368.5,664.5L1369.5,657.5L1370.5,662.5L1371.5,660.5L1372.5,659.5L1373.5,660.5L1374.5,662.5L1375.5,663.5L1376.5,661.5L1377.5,655.5L1378.5,665.5L1379.5,657.5H1380.5V662.5H1382.5V664.5L1383.5,659.5L1384.5,662.5L1385.5,663.5L1386.5,657.5L1387.5,662.5L1388.5,659.5L1389.5,663.5L1390.5,667.5L1391.5,662.5L1392.5,663.5L1393.5,660.5L1394.5,662.5L1395.5,665.5H1396.5V659.5H1399.5V660.5L1400.5,663.5L1401.5,661.5L1402.5,658.5L1403.5,661.5L1404.5,659.5L1405.5,664.5L1406.5,661.5L1407.5,662.5L1408.5,658.5L1409.5,662.5L1410.5,661.5L1411.5,657.5L1412.5,659.5L1413.5,660.5L1414.5,663.5L1415.5,662.5L1416.5,658.5L1417.5,659.5H1418.5V661.5H1421.5V662.5L1422.5,657.5L1423.5,661.5L1424.5,659.5L1425.5,660.5L1426.5,662.5L1427.5,659.5L1428.5,660.5L1429.5,659.5L1430.5,660.5L1431.5,662.5L1432.5,663.5L1433.5,662.5H1434.5V655.5H1436.5V663.5L1437.5,659.5L1438.5,664.5L1439.5,659.5L1440.5,664.5L1441.5,663.5H1442.5V661.5H1444.5V664.5H1446.5V656.5L1447.5,660.5L1448.5,663.5L1449.5,664.5L1450.5,656.5L1451.5,661.5L1452.5,659.5L1453.5,657.5L1454.5,661.5L1455.5,658.5L1456.5,659.5L1457.5,664.5L1458.5,662.5L1459.5,661.5L1460.5,664.5L1461.5,659.5L1462.5,663.5L1463.5,664.5L1464.5,661.5L1465.5,659.5L1466.5,661.5L1467.5,665.5L1468.5,659.5L1469.5,656.5L1470.5,657.5L1471.5,661.5L1472.5,657.5L1473.5,659.5" stroke="#00ff00" stroke-width="1"/><rect x="1473.0" y="660.0" width="1" height="14.0" fill="#00ff00" stroke="none"/><rect x="334.0" y="590.0" width="2" height="72.0" fill="#00ff00" stroke="none"/><rect x="652.0" y="614.0" width="1" height="48.0" fill="#00ff00" stroke="none"/><rect x="838.0" y="624.0" width="1" height="38.0" fill="#00ff00" stroke="none"/><rect x="908.0" y="627.0" width="2" height="35.0" fill="#00ff00" stroke="none"/><rect x="970.0" y="642.0" width="1" height="20.0" fill="#00ff00" stroke="none"/><rect x="1024.0" y="641.0" width="1" height="21.0" fill="#00ff00" stroke="none"/><rect x="1072.0" y="644.0" width="1" height="18.0" fill="#00ff00" stroke="none"/><rect x="1226.0" y="645.0" width="1" height="17.0" fill="#00ff00" stroke="none"/><rect x="1326.0" y="647.0" width="1" height="15.0" fill="#00ff00" stroke="none"/><rect x="1366.0" y="650.0" width="1" height="12.0" fill="#00ff00" stroke="none"/><path d="M8.5,652.5H9.5V656.5H10.5V653.5H11.5V651.5H13.5V649.5H14.5V636.5H15.5V499.5H16.5V382.5H17.5V529.5H19.5V636.5H20.5V649.5H22.5V656.5" stroke="#fff" stroke-width="1"/><path d="M22.5,656.5H25.5V665.5H28.5V662.5H31.5V663.5H33.5V662.5H36.5V663.5H41.5V659.5H43.5V662.5H46.5V665.5H48.5V663.5H51.5V658.5H53.5V660.5H56.5V667.5H58.5V666.5H61.5V659.5H63.5V663.5H65.5V658.5H68.5V666.5H70.5V661.5H75.5V670.5H77.5V665.5H79.5V663.5H82.5V660.5H84.5V668.5H86.5V663.5H89.5V669.5H91.5V664.5H93.5V666.5H98.5V663.5H100.5V657.5H102.5V664.5H104.5V660.5H107.5V664.5H109.5V659.5H111.5V660.5H115.5V665.5H117.5V666.5H119.5V660.5H122.5V661.5H124.5V667.5H126.5V663.5H128.5V659.5H130.5V661.5H132.5V668.5H134.5V659.5H138.5V665.5H140.5V669.5H142.5V664.5H144.5V662.5H146.5V663.5H148.5V668.5H150.5V665.5H152.5V661.5H154.5V668.5H156.5V667.5H158.5V666.5H160.5V662.5H162.5V665.5H164.5V666.5H166.5V671.5H168.5V664.5H170.5V667.5H172.5V660.5H175.5V664.5H177.5V662.5H179.5V666.5H181.5V661.5H183.5V659.5H185.5V668.5H187.5V663.5H188.5V661.5H190.5V658.5H192.5V669.5H194.5V665.5H196.5V663.5H197.5V660.5H201.5V661.5H203.5V658.5H205.5V664.5H206.5V666.5H210.5V658.5H212.5V670.5H213.5V662.5H215.5V664.5H217.5V661.5H219.5V659.5H220.5V666.5H222.5V665.5H224.5V661.5H225.5V663.5H227.5V659.5H229.5V656.5H230.5V667.5H235.5V663.5H237.5V667.5H239.5V659.5H242.5V662.5H244.5V665.5H245.5V664.5H247.5V660.5H250.5V661.5H252.5V662.5H255.5V659.5H256.5V668.5H258.5V665.5H259.5V663.5H263.5V662.5H264.5V658.5H266.5V660.5H267.5V662.5H269.5V663.5H270.5V662.5H272.5V664.5H273.5V661.5H275.5V666.5H276.5V664.5H278.5V667.5H279.5V666.5H281.5V668.5H282.5V661.5H284.5V664.5H285.5V665.5H287.5V661.5H288.5V663.5H290.5V659.5H293.5V663.5H294.5V664.5H296.5V663.5L297.5,660.5H298.5V663.5H300.5V662.5H301.5V664.5H304.5V668.5H306.5V658.5L307.5,666.5H308.5V664.5H310.5V665.5H311.5V662.5H313.5V664.5H315.5V660.5H317.5V662.5H318.5V665.5H321.5V666.5H322.5V665.5H324.5V666.5L325.5,664.5H326.5V660.5H328.5V661.5L329.5,659.5H330.5V660.5H332.5V663.5L333.5,658.5H334.5V664.5H336.5V666.5L337.5,663.5H338.5V660.5H340.5V666.5L341.5,661.5H342.5V665.5H344.5V664.5L345.5,663.5H346.5V666.5H348.5V665.5H351.5V664.5H353.5V663.5L354.5,666.5L355.5,667.5H356.5V663.5H358.5V665.5H360.5V663.5H362.5V667.5H363.5V664.5H365.5V671.5H367.5V663.5L368.5,660.5L369.5,664.5L370.5,661.5H371.5V664.5H373.5V662.5L374.5,664.5L375.5,665.5H376.5V663.5H379.5V664.5L380.5,665.5L381.5,667.5H382.5V666.5H384.5V663.5L385.5,664.5L386.5,668.5L387.5,669.5L388.5,663.5H389.5V664.5H391.5V663.5L392.5,666.5L393.5,661.5L394.5,668.5H395.5V661.5H397.5V665.5L398.5,663.5L399.5,659.5L400.5,662.5L401.5,665.5L402.5,662.5H403.5V665.5H405.5V662.5L406.5,663.5L407.5,665.5L408.5,666.5L409.5,663.5L410.5,666.5L411.5,662.5H412.5V665.5H414.5V662.5L415.5,665.5L416.5,666.5L417.5,663.5L418.5,666.5L419.5,663.5L420.5,664.5L421.5,663.5H422.5V666.5H424.5V660.5L425.5,664.5L426.5,667.5L427.5,664.5L428.5,663.5L429.5,664.5L430.5,663.5L431.5,664.5L432.5,662.5L433.5,666.5L434.5,669.5H435.5V658.5H437.5V668.5L438.5,665.5L439.5,666.5L440.5,661.5L441.5,659.5L442.5,662.5L443.5,663.5L444.5,671.5L445.5,659.5L446.5,662.5L447.5,664.5L448.5,667.5L449.5,663.5L450.5,660.5L451.5,664.5L452.5,663.5L453.5,664.5L454.5,665.5H455.5V666.5H457.5V664.5L458.5,662.5H459.5V664.5H461.5V662.5L462.5,667.5L463.5,666.5L464.5,664.5L465.5,665.5L466.5,668.5L467.5,664.5L468.5,665.5H469.5V664.5H471.5V663.5L472.5,666.5L473.5,664.5L474.5,662.5L475.5,668.5L476.5,662.5L477.5,666.5L478.5,659.5L479.5,667.5L480.5,665.5L481.5,662.5L482.5,666.5H483.5V664.5H485.5V672.5L486.5,661.5L487.5,663.5L488.5,659.5L489.5,666.5L490.5,662.5L491.5,668.5L492.5,662.5L493.5,664.5L494.5,663.5L495.5,666.5L496.5,661.5L497.5,662.5L498.5,663.5L499.5,664.5L500.5,663.5L501.5,660.5L502.5,668.5L503.5,665.5L504.5,667.5L505.5,663.5L506.5,664.5L507.5,666.5L508.5,665.5L509.5,659.5L510.5,663.5L511.5,665.5L512.5,663.5L513.5,662.5L514.5,663.5L515.5,662.5L516.5,666.5L517.5,663.5H518.5V659.5H520.5V660.5L521.5,665.5L522.5,663.5L523.5,664.5L524.5,667.5L525.5,662.5H526.5V666.5H528.5V662.5L529.5,665.5L530.5,666.5L531.5,665.5L532.5,661.5H533.5V665.5H535.5V664.5L536.5,660.5L537.5,664.5H538.5V663.5H540.5V665.5H542.5V663.5L543.5,665.5L544.5,664.5L545.5,662.5L546.5,659.5L547.5,664.5L548.5,661.5L549.5,662.5L550.5,668.5L551.5,661.5L552.5,666.5L553.5,661.5L554.5,664.5H555.5V662.5H557.5V663.5L558.5,662.5H559.5V658.5H561.5V666.5H563.5V664.5L564.5,665.5L565.5,664.5L566.5,663.5L567.5,666.5L568.5,662.5L569.5,666.5L570.5,663.5H571.5V664.5H573.5V666.5H575.5V667.5L576.5,666.5H577.5V662.5H579.5V665.5L580.5,660.5L581.5,665.5L582.5,666.5L583.5,665.5L584.5,661.5L585.5,659.5L586.5,664.5L587.5,670.5L588.5,666.5L589.5,658.5L590.5,661.5L591.5,663.5L592.5,659.5L593.5,664.5L594.5,661.5L595.5,663.5L596.5,664.5L597.5,665.5L598.5,666.5L599.5,662.5L600.5,658.5L601.5,666.5L602.5,664.5L603.5,661.5L604.5,663.5L605.5,660.5L606.5,662.5L607.5,664.5L608.5,661.5L609.5,668.5L610.5,664.5L611.5,659.5H612.5V663.5H614.5V658.5L615.5,665.5L616.5,668.5L617.5,662.5H618.5V665.5H620.5V656.5H621.5V662.5H623.5V664.5L624.5,666.5L625.5,664.5L626.5,667.5L627.5,666.5L628.5,663.5L629.5,664.5L630.5,666.5L631.5,667.5L632.5,665.5L633.5,662.5L634.5,664.5L635.5,663.5L636.5,660.5L637.5,662.5L638.5,666.5L639.5,663.5L640.5,668.5L641.5,664.5L642.5,663.5H643.5V665.5H645.5V662.5L646.5,664.5L647.5,662.5L648.5,661.5L649.5,666.5L650.5,663.5L651.5,666.5H652.5V663.5H654.5V662.5L655.5,665.5L656.5,662.5L657.5,665.5L658.5,662.5L659.5,666.5H660.5V663.5H663.5V666.5L664.5,662.5H665.5V664.5H669.5V660.5L670.5,663.5L671.5,667.5L672.5,658.5L673.5,666.5H674.5V664.5H676.5V667.5L677.5,662.5L678.5,663.5L679.5,657.5L680.5,662.5L681.5,664.5L682.5,661.5L683.5,666.5L684.5,662.5L685.5,669.5L686.5,665.5H687.5V668.5H689.5V667.5H690.5V665.5H692.5V666.5H694.5V661.5L695.5,664.5L696.5,665.5L697.5,661.5L698.5,663.5L699.5,666.5L700.5,664.5L701.5,668.5L702.5,665.5L703.5,656.5L704.5,664.5L705.5,662.5L706.5,668.5L707.5,665.5H708.5V663.5H710.5V662.5H711.5V661.5H714.5V665.5H716.5V662.5L717.5,665.5H718.5V667.5H720.5V661.5L721.5,665.5L722.5,668.5L723.5,670.5L724.5,663.5L725.5,664.5L726.5,665.5L727.5,668.5L728.5,664.5L729.5,667.5L730.5,664.5L731.5,669.5L732.5,666.5L733.5,662.5L734.5,663.5L735.5,660.5L736.5,662.5L737.5,661.5L738.5,666.5L739.5,659.5L740.5,661.5L741.5,664.5L742.5,663.5L743.5,660.5L744.5,666.5L745.5,662.5L746.5,669.5L747.5,665.5L748.5,659.5L749.5,669.5L750.5,666.5L751.5,662.5L752.5,663.5L753.5,669.5H754.5V665.5H757.5V669.5L758.5,657.5L759.5,666.5L760.5,663.5L761.5,660.5L762.5,659.5L763.5,662.5L764.5,660.5L765.5,665.5L766.5,663.5L767.5,660.5L768.5,661.5L769.5,664.5L770.5,660.5L771.5,668.5H772.5V663.5H774.5V662.5L775.5,660.5L776.5,664.5L777.5,667.5L778.5,662.5L779.5,664.5L780.5,661.5L781.5,663.5L782.5,667.5H783.5V664.5H785.5V663.5H786.5V666.5H788.5V667.5L789.5,663.5L790.5,666.5L791.5,667.5H792.5V663.5H794.5V667.5L795.5,662.5L796.5,664.5H797.5V661.5H799.5V664.5H801.5V661.5L802.5,662.5L803.5,664.5L804.5,665.5L805.5,666.5L806.5,665.5L807.5,660.5L808.5,663.5L809.5,661.5L810.5,667.5L811.5,664.5L812.5,668.5L813.5,667.5L814.5,666.5L815.5,662.5L816.5,666.5L817.5,661.5L818.5,663.5L819.5,669.5L820.5,665.5H821.5V663.5H824.5V665.5L825.5,660.5L826.5,670.5L827.5,660.5H828.5V665.5H830.5V661.5L831.5,667.5H832.5V664.5H836.5V666.5L837.5,661.5H838.5V668.5H840.5V665.5L841.5,661.5L842.5,662.5L843.5,666.5H844.5V663.5H846.5V666.5L847.5,668.5H848.5V662.5H850.5V664.5H851.5V663.5H853.5V662.5L854.5,664.5L855.5,660.5L856.5,662.5L857.5,667.5L858.5,663.5H859.5V664.5H861.5V665.5L862.5,671.5L863.5,666.5L864.5,661.5L865.5,663.5L866.5,668.5H867.5V662.5H869.5V668.5L870.5,664.5L871.5,669.5L872.5,663.5L873.5,664.5L874.5,667.5L875.5,664.5L876.5,662.5L877.5,661.5L878.5,663.5L879.5,662.5L880.5,661.5L881.5,664.5L882.5,660.5L883.5,670.5L884.5,662.5L885.5,660.5L886.5,665.5L887.5,662.5L888.5,664.5L889.5,659.5L890.5,662.5L891.5,664.5L892.5,663.5L893.5,667.5L894.5,666.5L895.5,660.5L896.5,663.5L897.5,662.5L898.5,665.5L899.5,661.5L900.5,663.5L901.5,660.5H902.5V659.5H904.5V658.5L905.5,664.5L906.5,660.5L907.5,667.5L908.5,662.5L909.5,665.5L910.5,668.5L911.5,666.5L912.5,663.5L913.5,662.5L914.5,664.5L915.5,666.5L916.5,664.5L917.5,668.5L918.5,662.5L919.5,663.5L920.5,667.5L921.5,663.5L922.5,664.5L923.5,657.5L924.5,661.5L925.5,665.5L926.5,663.5H927.5V665.5H929.5V662.5H931.5V664.5L932.5,662.5L933.5,661.5L934.5,665.5H935.5V663.5H937.5V662.5L938.5,661.5L939.5,659.5L940.5,662.5L941.5,661.5L942.5,665.5L943.5,663.5L944.5,662.5L945.5,668.5L946.5,664.5L947.5,665.5L948.5,667.5L949.5,660.5L950.5,661.5L951.5,663.5H952.5V662.5H954.5V663.5L955.5,657.5L956.5,662.5L957.5,663.5L958.5,666.5L959.5,659.5L960.5,662.5L961.5,659.5L962.5,660.5L963.5,662.5H964.5V664.5H966.5V668.5L967.5,671.5L968.5,663.5L969.5,665.5L970.5,663.5L971.5,665.5L972.5,660.5L973.5,661.5L974.5,659.5L975.5,662.5L976.5,663.5L977.5,665.5H978.5V662.5H980.5V666.5L981.5,659.5L982.5,661.5L983.5,663.5L984.5,664.5L985.5,662.5H986.5V666.5H988.5V664.5L989.5,663.5L990.5,661.5L991.5,663.5L992.5,666.5L993.5,663.5L994.5,666.5L995.5,665.5L996.5,660.5L997.5,664.5L998.5,663.5L999.5,660.5L1000.5,662.5L1001.5,661.5L1002.5,660.5L1003.5,664.5L1004.5,666.5L1005.5,665.5L1006.5,666.5L1007.5,664.5L1008.5,663.5L1009.5,660.5L1010.5,662.5L1011.5,663.5L1012.5,659.5L1013.5,661.5H1014.5V663.5H1016.5V665.5L1017.5,664.5L1018.5,662.5H1019.5V664.5H1021.5V666.5L1022.5,663.5L1023.5,666.5L1024.5,665.5L1025.5,663.5L1026.5,664.5L1027.5,667.5H1028.5V663.5H1030.5V660.5L1031.5,665.5L1032.5,662.5L1033.5,664.5L1034.5,657.5L1035.5,663.5L1036.5,662.5L1037.5,663.5L1038.5,661.5L1039.5,663.5L1040.5,659.5L1041.5,660.5L1042.5,666.5L1043.5,665.5L1044.5,660.5H1045.5V663.5H1047.5V670.5L1048.5,660.5L1049.5,655.5L1050.5,665.5L1051.5,662.5L1052.5,661.5L1053.5,660.5L1054.5,666.5L1055.5,663.5L1056.5,665.5L1057.5,662.5L1058.5,657.5H1059.5V663.5H1061.5V661.5L1062.5,662.5L1063.5,664.5H1064.5V663.5H1066.5V665.5L1067.5,663.5L1068.5,660.5H1069.5V664.5H1071.5V663.5L1072.5,661.5H1073.5V663.5H1076.5V667.5L1077.5,662.5L1078.5,660.5L1079.5,664.5L1080.5,667.5L1081.5,665.5L1082.5,663.5L1083.5,659.5L1084.5,663.5L1085.5,659.5H1086.5V663.5H1088.5V660.5L1089.5,664.5L1090.5,666.5L1091.5,668.5L1092.5,665.5H1093.5V661.5H1095.5V664.5L1096.5,662.5L1097.5,663.5L1098.5,664.5L1099.5,661.5L1100.5,663.5L1101.5,662.5L1102.5,660.5L1103.5,663.5L1104.5,660.5L1105.5,659.5L1106.5,666.5L1107.5,661.5L1108.5,660.5L1109.5,664.5L1110.5,662.5H1111.5V663.5H1113.5V664.5L1114.5,665.5L1115.5,658.5L1116.5,663.5L1117.5,662.5L1118.5,666.5L1119.5,667.5L1120.5,658.5L1121.5,663.5L1122.5,661.5L1123.5,658.5L1124.5,660.5L1125.5,663.5L1126.5,659.5L1127.5,661.5L1128.5,662.5L1129.5,659.5H1130.5V662.5H1132.5V659.5L1133.5,664.5L1134.5,660.5L1135.5,661.5L1136.5,667.5H1137.5V665.5H1139.5V658.5L1140.5,660.5L1141.5,664.5L1142.5,661.5L1143.5,666.5H1144.5V662.5H1146.5V660.5H1148.5V661.5L1149.5,662.5L1150.5,663.5L1151.5,666.5L1152.5,660.5L1153.5,659.5L1154.5,663.5L1155.5,660.5L1156.5,659.5L1157.5,664.5L1158.5,662.5L1159.5,659.5L1160.5,662.5L1161.5,659.5L1162.5,662.5L1163.5,663.5L1164.5,661.5L1165.5,659.5L1166.5,665.5L1167.5,663.5L1168.5,669.5L1169.5,662.5L1170.5,658.5L1171.5,663.5L1172.5,661.5L1173.5,665.5L1174.5,660.5L1175.5,662.5L1176.5,663.5L1177.5,660.5L1178.5,658.5L1179.5,662.5L1180.5,660.5L1181.5,662.5L1182.5,657.5L1183.5,660.5L1184.5,662.5L1185.5,664.5L1186.5,658.5L1187.5,663.5L1188.5,661.5L1189.5,659.5L1190.5,664.5L1191.5,661.5L1192.5,664.5L1193.5,661.5L1194.5,660.5L1195.5,658.5L1196.5,662.5L1197.5,663.5L1198.5,659.5L1199.5,662.5L1200.5,663.5L1201.5,660.5H1202.5V662.5H1204.5V663.5L1205.5,659.5L1206.5,661.5L1207.5,662.5L1208.5,661.5L1209.5,663.5L1210.5,658.5L1211.5,664.5L1212.5,663.5L1213.5,661.5H1214.5V663.5H1216.5V664.5L1217.5,661.5L1218.5,663.5L1219.5,662.5L1220.5,663.5H1221.5V661.5H1223.5V658.5L1224.5,665.5H1225.5V663.5H1227.5V660.5L1228.5,666.5H1229.5V660.5H1231.5V661.5L1232.5,664.5L1233.5,661.5L1234.5,659.5L1235.5,656.5L1236.5,662.5L1237.5,658.5L1238.5,660.5L1239.5,663.5H1240.5V665.5H1242.5V662.5L1243.5,661.5L1244.5,665.5L1245.5,661.5L1246.5,659.5L1247.5,662.5L1248.5,666.5H1249.5V664.5H1251.5V663.5L1252.5,658.5L1253.5,660.5L1254.5,657.5L1255.5,660.5L1256.5,664.5L1257.5,660.5L1258.5,659.5L1259.5,664.5L1260.5,659.5L1261.5,664.5H1262.5V663.5H1264.5V658.5L1265.5,665.5L1266.5,661.5L1267.5,662.5H1268.5V659.5H1270.5V662.5L1271.5,661.5L1272.5,660.5L1273.5,661.5L1274.5,663.5L1275.5,664.5L1276.5,663.5L1277.5,664.5H1278.5V663.5H1280.5V661.5L1281.5,659.5L1282.5,662.5L1283.5,663.5L1284.5,669.5L1285.5,662.5L1286.5,659.5L1287.5,663.5L1288.5,659.5L1289.5,662.5L1290.5,663.5L1291.5,664.5L1292.5,661.5H1293.5V660.5H1296.5V662.5H1297.5V661.5H1300.5V660.5L1301.5,657.5H1302.5V661.5H1306.5V660.5L1307.5,666.5L1308.5,661.5L1309.5,662.5L1310.5,663.5L1311.5,658.5H1312.5V660.5H1314.5V658.5H1315.5V661.5H1317.5V656.5L1318.5,657.5L1319.5,656.5L1320.5,658.5L1321.5,661.5H1322.5V662.5H1324.5V661.5L1325.5,667.5L1326.5,660.5L1327.5,658.5L1328.5,660.5L1329.5,663.5H1330.5V660.5H1332.5V662.5H1333.5V661.5H1335.5V664.5L1336.5,660.5L1337.5,658.5L1338.5,663.5L1339.5,658.5L1340.5,661.5H1341.5V660.5H1343.5V665.5L1344.5,662.5L1345.5,655.5L1346.5,664.5H1347.5V661.5H1349.5V657.5L1350.5,659.5H1351.5V662.5H1353.5V668.5L1354.5,660.5L1355.5,663.5L1356.5,660.5H1357.5V661.5H1359.5V660.5L1360.5,661.5L1361.5,663.5L1362.5,661.5L1363.5,662.5L1364.5,659.5L1365.5,662.5L1366.5,656.5L1367.5,660.5L1368.5,663.5L1369.5,660.5L1370.5,661.5H1371.5V663.5H1373.5V662.5L1374.5,665.5L1375.5,664.5L1376.5,658.5L1377.5,662.5L1378.5,661.5H1379.5V660.5H1381.5V665.5L1382.5,659.5L1383.5,663.5L1384.5,659.5L1385.5,661.5L1386.5,659.5H1387.5V661.5H1389.5V662.5H1390.5V660.5H1393.5V659.5L1394.5,657.5L1395.5,667.5L1396.5,661.5L1397.5,663.5L1398.5,665.5L1399.5,663.5L1400.5,658.5L1401.5,660.5L1402.5,663.5H1403.5V661.5H1405.5V659.5L1406.5,662.5L1407.5,657.5L1408.5,661.5L1409.5,659.5L1410.5,661.5L1411.5,662.5L1412.5,659.5L1413.5,657.5L1414.5,654.5H1415.5V660.5H1417.5V657.5L1418.5,658.5L1419.5,664.5L1420.5,661.5H1421.5V659.5H1423.5V661.5L1424.5,660.5L1425.5,662.5L1426.5,658.5L1427.5,662.5L1428.5,658.5H1429.5V664.5H1431.5V658.5H1432.5V662.5H1434.5V657.5H1436.5V661.5L1437.5,662.5L1438.5,663.5L1439.5,659.5L1440.5,661.5L1441.5,662.5L1442.5,661.5H1443.5V659.5H1447.5V657.5L1448.5,658.5L1449.5,657.5L1450.5,660.5L1451.5,659.5L1452.5,660.5L1453.5,656.5L1454.5,664.5L1455.5,662.5H1456.5V661.5H1458.5V662.5L1459.5,660.5L1460.5,658.5L1461.5,663.5L1462.5,662.5L1463.5,661.5L1464.5,662.5L1465.5,654.5H1466.5V659.5H1468.5V662.5L1469.5,658.5L1470.5,662.5H1471.5V661.5H1473.5V659.5" stroke="#fff" stroke-width="1"/><rect x="334.0" y="635.0" width="2" height="29.0" fill="#fff" stroke="none"/><rect x="520.0" y="577.0" width="1" height="87.0" fill="#fff" stroke="none"/><rect x="520.0" y="596.0" width="2" height="68.0" fill="#fff" stroke="none"/><rect x="652.0" y="633.0" width="1" height="31.0" fill="#fff" stroke="none"/><rect x="754.0" y="616.0" width="1" height="48.0" fill="#fff" stroke="none"/><rect x="838.0" y="641.0" width="1" height="23.0" fill="#fff" stroke="none"/><rect x="908.0" y="652.0" width="1" height="12.0" fill="#fff" stroke="none"/><rect x="1115.0" y="642.0" width="1" height="22.0" fill="#fff" stroke="none"/><rect x="1192.0" y="639.0" width="1" height="25.0" fill="#fff" stroke="none"/><rect x="1287.0" y="643.0" width="1" height="21.0" fill="#fff" stroke="none"/><rect x="17.0" y="380.0" width="1" height="10.0" fill="#fff" stroke="none"/><rect x="16.0" y="390.0" width="2" height="109.0" fill="#fff" stroke="none"/><rect x="17.0" y="381.0" width="1" height="2.0" fill="#00ff00" stroke="none"/></g></svg>
<div class="a" style="left:1501px;top:393px;width:1px;height:279px;background:#f4f4f4"></div>
<div class="a" style="left:1501px;top:392px;width:1px;height:1px;background:#555"></div>
<div class="a" style="left:1501px;top:671px;width:1px;height:2px;background:#555"></div>
<svg class="a" style="left:18px;top:389px" width="24" height="24" viewBox="0 0 24 24"><rect x="1" y="1" width="22" height="22" rx="3" fill="#000" stroke="#fff" stroke-width="1.7"/><g shape-rendering="crispEdges"><path d="M3,4.5H21M3,9.5H21M3,14.5H21M6.5,3V19M13.5,3V19M17.5,3V19M19.5,3V15" stroke="#8a8a8a" stroke-width="1"/><path d="M10.5,3V19M16.5,12V19M19.5,15V19" stroke="#00f400" stroke-width="1.2"/><path d="M3,21 V19 H4 V17 H5 V19 H6 V20 H7 V19 H9 V17.5 H12 V19 H14 V18 H15 V19 H16 V20 H17 V19 H21 V21 Z" fill="#00f400"/></g></svg>
<div class="t lg" style="left:58.5px;top:385px;color:#fff;font-size:12px;">Left channel</div>
<div class="t lg" style="left:58.5px;top:401px;color:#00ff00;font-size:12px;">Right channel</div>
<div class="t pl" style="left:1476.5px;top:378px;font-size:12px;">dB</div>
<div class="t pl" style="left:1476px;top:410.5px;font-size:12px;">-20</div>
<div class="t pl" style="left:1476px;top:430.5px;font-size:12px;">-30</div>
<div class="t pl" style="left:1476px;top:449.5px;font-size:12px;">-40</div>
<div class="t pl" style="left:1476px;top:469.5px;font-size:12px;">-50</div>
<div class="t pl" style="left:1476px;top:489.5px;font-size:12px;">-60</div>
<div class="t pl" style="left:1476px;top:508.5px;font-size:12px;">-70</div>
<div class="t pl" style="left:1476px;top:528.5px;font-size:12px;">-80</div>
<div class="t pl" style="left:1476px;top:547.5px;font-size:12px;">-90</div>
<div class="t pl" style="left:1476px;top:567.5px;font-size:12px;">-100</div>
<div class="t pl" style="left:1476px;top:587.5px;font-size:12px;">-110</div>
<div class="t pl" style="left:1476px;top:606.5px;font-size:12px;">-120</div>
<div class="t pl" style="left:1476px;top:626.5px;font-size:12px;">-130</div>
<div class="t pl" style="left:1476px;top:645.5px;font-size:12px;">-140</div>
<div class="tc pl" style="left:304.37664542550016px;width:60px;top:674px;font-size:12px;">2K</div>
<div class="tc pl" style="left:490.15292372924387px;width:60px;top:674px;font-size:12px;">3K</div>
<div class="tc pl" style="left:724.2033545744998px;width:60px;top:674px;font-size:12px;">5K</div>
<div class="tc pl" style="left:1041.79px;width:60px;top:674px;font-size:12px;">10K</div>
<div class="tc pl" style="left:1359.3766454255px;width:60px;top:674px;font-size:12px;">20K</div>
<div class="t pl" style="left:1474.5px;top:674px;font-size:12px;">Hz</div>
<svg class="a" style="filter:brightness(1);left:963px;top:345px" width="501" height="292" viewBox="963 345 501 292" font-family="Liberation Sans, sans-serif"><rect x="963" y="345" width="501" height="292" fill="#fff"/><g stroke="#b4b4b4" stroke-width="1"><line x1="1012" y1="429.3" x2="1222.5" y2="429.3"/><line x1="1012" y1="464.3" x2="1222.5" y2="464.3"/><line x1="1012" y1="499.3" x2="1222.5" y2="499.3"/><line x1="1012" y1="534.3" x2="1222.5" y2="534.3"/><line x1="1012" y1="569.3" x2="1222.5" y2="569.3"/></g><g stroke="#808080" stroke-width="1.1" stroke-dasharray="7.2,2.7"><line x1="1046.5" y1="396.5" x2="1046.5" y2="604.5"/><line x1="1116.9" y1="396.5" x2="1116.9" y2="604.5"/><line x1="1187.0" y1="396.5" x2="1187.0" y2="604.5"/></g><rect x="1012" y="393.5" width="210.5" height="211.0" fill="none" stroke="#1a1a1a" stroke-width="1.3"/><line x1="1046.4" y1="586.3" x2="1187" y2="446.4" stroke="#f01818" stroke-width="1.5"/><line x1="1046.4" y1="446.4" x2="1187" y2="586.3" stroke="#1c28f0" stroke-width="1.5"/><text x="1071.8" y="357.7" font-size="9.6" font-weight="bold" fill="#111" text-anchor="start" textLength="91.7" lengthAdjust="spacingAndGlyphs" >OUTPUT CURRENT</text><text x="1112.8" y="369.7" font-size="9.6" font-weight="bold" fill="#111" text-anchor="start" textLength="10.4" lengthAdjust="spacingAndGlyphs" >vs</text><text x="1087.6" y="381.9" font-size="9.6" font-weight="bold" fill="#111" text-anchor="start" textLength="60.4" lengthAdjust="spacingAndGlyphs" >INPUT CODE</text><text x="1003.0" y="396.7" font-size="7.8" font-weight="bold" fill="#111" text-anchor="start" textLength="4.2" lengthAdjust="spacingAndGlyphs" >0</text><text x="994.5" y="433.0" font-size="10.2" font-weight="bold" fill="#111" text-anchor="start" textLength="9.6" lengthAdjust="spacingAndGlyphs" >-2</text><text x="994.5" y="468.1" font-size="10.2" font-weight="bold" fill="#111" text-anchor="start" textLength="9.6" lengthAdjust="spacingAndGlyphs" >-4</text><text x="994.5" y="503.2" font-size="10.2" font-weight="bold" fill="#111" text-anchor="start" textLength="9.6" lengthAdjust="spacingAndGlyphs" >-6</text><text x="994.5" y="538.3" font-size="10.2" font-weight="bold" fill="#111" text-anchor="start" textLength="9.6" lengthAdjust="spacingAndGlyphs" >-8</text><text x="990.9" y="572.2" font-size="10.2" font-weight="bold" fill="#111" text-anchor="start" textLength="17.0" lengthAdjust="spacingAndGlyphs" >-10</text><text x="990.9" y="604.6" font-size="10.2" font-weight="bold" fill="#111" text-anchor="start" textLength="17.0" lengthAdjust="spacingAndGlyphs" >-12</text><text x="1021.1" y="616.4" font-size="8.8" font-weight="bold" fill="#111" text-anchor="start" textLength="51.2" lengthAdjust="spacingAndGlyphs" >800000(–FS)</text><text x="1090.9" y="616.4" font-size="8.8" font-weight="bold" fill="#111" text-anchor="start" textLength="52.8" lengthAdjust="spacingAndGlyphs" >000000(BPZ)</text><text x="1159.9" y="616.4" font-size="8.8" font-weight="bold" fill="#111" text-anchor="start" textLength="53.6" lengthAdjust="spacingAndGlyphs" >7FFFFF(+FS)</text><text x="1081.9" y="629.6" font-size="8.8" font-weight="bold" fill="#111" text-anchor="start" textLength="70.1" lengthAdjust="spacingAndGlyphs" >Input Code – Hex</text><text transform="translate(978.3,552.8) rotate(-90)" font-size="8.8" font-weight="bold" fill="#111" textLength="105.5" lengthAdjust="spacingAndGlyphs">I<tspan font-size="6.6" dy="1.6">O</tspan><tspan dy="-1.6"> – Output Current – mA</tspan></text><text x="1063.4" y="456" font-size="8.8" font-weight="bold" fill="#111" textLength="26.4" lengthAdjust="spacingAndGlyphs">I<tspan font-size="7.4" dy="1.8">OUT</tspan><tspan font-size="8.8" dy="-3.2">N</tspan></text><text x="1082.9" y="565" font-size="8.8" font-weight="bold" fill="#111" textLength="26.4" lengthAdjust="spacingAndGlyphs">I<tspan font-size="7.4" dy="1.8">OUT</tspan><tspan font-size="8.8" dy="-3.2">P</tspan></text><text x="1263.8" y="421" font-size="8.8" font-weight="bold" fill="#111" textLength="26.4" lengthAdjust="spacingAndGlyphs">I<tspan font-size="7.4" dy="1.8">OUT</tspan><tspan font-size="8.8" dy="-3.2">P</tspan></text><text x="1256.5" y="631.3" font-size="8.8" font-weight="bold" fill="#111" textLength="26.4" lengthAdjust="spacingAndGlyphs">I<tspan font-size="7.4" dy="1.8">OUT</tspan><tspan font-size="8.8" dy="-3.2">N</tspan></text><text x="1180.2" y="357.4" font-size="11.4" font-weight="bold" fill="#1414f0" text-anchor="start" textLength="109.0" lengthAdjust="spacingAndGlyphs" >2out DAC&#160; PCM1796</text><g stroke="#000" stroke-width="2.2" fill="none" stroke-linecap="square"><path d="M1238.8,447.5 V603.5"/><path d="M1238.8,447.5 H1255.5 M1288.5,447.5 H1381.8 V467.5 M1381.8,497.5 V554.5 M1381.8,583.8 V603.5 H1288.5 M1255.5,603.5 H1238.8"/><path d="M1323.1,424.5 V467 M1323.1,497.5 V554.5 M1323.1,584 V623.6"/><path d="M1361,447.5 V519 M1361,525 V603.5"/><path d="M1381.8,528.2 H1444.8 V547"/><path d="M1279.8,527.8 V550.5"/></g><path d="M1235,527.8 H1327" stroke="#000" stroke-width="3.4" fill="none"/><path d="M1353,519.3 H1369 M1353,524.6 H1369" stroke="#000" stroke-width="2.2" fill="none"/><rect x="1269.5" y="550.8" width="20" height="5.8" fill="#fff" stroke="#000" stroke-width="2"/><rect x="1434.3" y="547.3" width="20" height="5.8" fill="#fff" stroke="#000" stroke-width="2"/><rect x="1318.4" y="467.3" width="11.4" height="30" fill="#fff" stroke="#0a8a0a" stroke-width="2.3"/><rect x="1318.4" y="554.6" width="11.4" height="29.4" fill="#fff" stroke="#0a8a0a" stroke-width="2.3"/><rect x="1376.9" y="467.9" width="11.2" height="29.5" fill="#fff" stroke="#000" stroke-width="2.2"/><rect x="1376.9" y="554.6" width="11.2" height="29" fill="#fff" stroke="#000" stroke-width="2.2"/><circle cx="1322.8" cy="447.5" r="4.2" fill="#000"/><circle cx="1360.8" cy="447.5" r="4.2" fill="#000"/><circle cx="1238.8" cy="527.8" r="4.2" fill="#000"/><circle cx="1279.8" cy="527.8" r="4.2" fill="#000"/><circle cx="1324" cy="527.8" r="4.2" fill="#000"/><circle cx="1381.8" cy="528.2" r="4.2" fill="#000"/><circle cx="1322.8" cy="603.5" r="4.2" fill="#000"/><circle cx="1360.8" cy="603" r="4.2" fill="#000"/><circle cx="1272" cy="447.5" r="15.8" fill="#fff" stroke="#000" stroke-width="2.5"/><path d="M1262.2,444.3 H1271 V440.9 L1281.6,447.5 L1271,454.1 V450.7 H1262.2 Z" fill="#fff" stroke="#000" stroke-width="2.3" stroke-linejoin="miter"/><circle cx="1272" cy="603.5" r="15.8" fill="#fff" stroke="#000" stroke-width="2.5"/><path d="M1262.2,600.3 H1271 V596.9 L1281.6,603.5 L1271,610.1 V606.7 H1262.2 Z" fill="#fff" stroke="#000" stroke-width="2.3" stroke-linejoin="miter"/><path d="M1323.1,421.4 H1336 V417.6 L1349.6,425 L1336,432.4 V428.6 H1323.1" fill="#fff" stroke="#000" stroke-width="2.2"/><path d="M1323.1,619.8 H1338.5 V616 L1352.8,623.3 L1338.5,630.6 V626.8 H1323.1" fill="#fff" stroke="#000" stroke-width="2.2"/><text x="1358.7" y="428.9" font-size="10.2" font-weight="bold" fill="#111" text-anchor="start" textLength="28.9" lengthAdjust="spacingAndGlyphs" >Out +</text><text x="1360.7" y="626.3" font-size="10.2" font-weight="bold" fill="#111" text-anchor="start" textLength="26.3" lengthAdjust="spacingAndGlyphs" >Out -</text><text x="1248.9" y="478.0" font-size="10.2" font-weight="bold" fill="#f01818" text-anchor="start" textLength="55.0" lengthAdjust="spacingAndGlyphs" >8 mA&#160; p-p</text><text x="1250.9" y="582.0" font-size="10.2" font-weight="bold" fill="#1414f0" text-anchor="start" textLength="55.0" lengthAdjust="spacingAndGlyphs" >8 mA&#160; p-p</text><text x="1335.6" y="487.2" font-size="10.2" font-weight="bold" fill="#f01818" text-anchor="start" textLength="19.6" lengthAdjust="spacingAndGlyphs" >51R</text><text x="1334.2" y="574.0" font-size="10.2" font-weight="bold" fill="#f01818" text-anchor="start" textLength="19.6" lengthAdjust="spacingAndGlyphs" >51R</text><text x="1391.9" y="486.7" font-size="10.2" font-weight="bold" fill="#1414f0" text-anchor="start" textLength="26.9" lengthAdjust="spacingAndGlyphs" >796R</text><text x="1391.9" y="574.0" font-size="10.2" font-weight="bold" fill="#1414f0" text-anchor="start" textLength="26.9" lengthAdjust="spacingAndGlyphs" >796R</text><text x="1388.4" y="519.0" font-size="9.4" font-weight="normal" fill="#333" text-anchor="start" textLength="38.2" lengthAdjust="spacingAndGlyphs" >Cf=32nF</text></svg>
<div class="a" style="left:0;top:689px;width:1502px;height:349px;background:#1a7fd4"></div>
<div class="a" style="left:1px;top:690px;width:1501px;height:348px;background:linear-gradient(90deg,#c2ceaa 0,#cad4b7 250px,#d4dac2 500px,#dce1cc 750px,#dce1cc 100%)"></div>
<div class="a" style="left:1px;top:690px;width:1501px;height:30px;background:#fff"></div>
<svg class="a" style="left:9px;top:696px" width="16" height="16" viewBox="0 0 16 16"><rect width="16" height="16" fill="#8a9c62"/><rect y="9" width="16" height="2.2" fill="#2f4a1c"/><rect y="11.2" width="16" height="4.8" fill="#7f9157"/><path d="M0,9.6 L2.6,9.3 L5.6,2.2 L8.2,13.8 L11.2,1.2 L13,8.6 L16,8.2" fill="none" stroke="#fff" stroke-width="1.5" stroke-linejoin="miter"/></svg>
<div class="t " style="left:30.5px;top:697.5px;transform:scaleX(1.02);color:#000;font-size:12px">Intermodulation distortion test</div>
<svg class="a" style="left:0;top:0" width="1502" height="1038" viewBox="0 0 1502 1038" shape-rendering="crispEdges"><rect x="1401" y="704" width="10" height="1" fill="#000"/><rect x="1446.5" y="699.5" width="9" height="9" fill="none" stroke="#000" stroke-width="1"/></svg>
<svg class="a" style="left:1491px;top:698px" width="12" height="12" viewBox="0 0 12 12"><path d="M1,1 L11,11 M11,1 L1,11" stroke="#000" stroke-width="1.1" fill="none"/></svg>
<div class="a" style="left:4px;top:723px;width:1496px;height:313px;background:#d8d8d8"></div>
<div class="a" style="left:1500px;top:724px;width:2px;height:314px;background:#f0f0f0"></div>
<div class="a" style="left:5px;top:724px;width:1468px;height:297px;background:#fff;border-left:1px solid #808080;border-top:1px solid #808080"></div>
<div class="a" style="left:0;top:1036px;width:1502px;height:2px;background:#e6e6e6"></div>
<svg class="a" style="left:6px;top:725px" width="1466" height="295" viewBox="6 725 1466 295" ><rect x="6" y="725" width="1466" height="295" fill="#000"/><g stroke="#686868" stroke-width="1" shape-rendering="crispEdges"><line x1="94.5" y1="725" x2="94.5" y2="1020"/><line x1="243.5" y1="725" x2="243.5" y2="1020"/><line x1="375.5" y1="725" x2="375.5" y2="1020"/><line x1="493.5" y1="725" x2="493.5" y2="1020"/><line x1="599.5" y1="725" x2="599.5" y2="1020"/><line x1="696.5" y1="725" x2="696.5" y2="1020"/><line x1="786.5" y1="725" x2="786.5" y2="1020"/><line x1="869.5" y1="725" x2="869.5" y2="1020"/><line x1="946.5" y1="725" x2="946.5" y2="1020"/><line x1="1018.5" y1="725" x2="1018.5" y2="1020"/><line x1="1086.5" y1="725" x2="1086.5" y2="1020"/><line x1="1149.5" y1="725" x2="1149.5" y2="1020"/><line x1="1210.5" y1="725" x2="1210.5" y2="1020"/><line x1="1267.5" y1="725" x2="1267.5" y2="1020"/><line x1="1322.5" y1="725" x2="1322.5" y2="1020"/><line x1="1374.5" y1="725" x2="1374.5" y2="1020"/><line x1="1423.5" y1="725" x2="1423.5" y2="1020"/><line x1="6" y1="745.5" x2="1472" y2="745.5"/><line x1="6" y1="764.5" x2="1472" y2="764.5"/><line x1="6" y1="784.5" x2="1472" y2="784.5"/><line x1="6" y1="803.5" x2="1472" y2="803.5"/><line x1="6" y1="823.5" x2="1472" y2="823.5"/><line x1="6" y1="843.5" x2="1472" y2="843.5"/><line x1="6" y1="862.5" x2="1472" y2="862.5"/><line x1="6" y1="882.5" x2="1472" y2="882.5"/><line x1="6" y1="901.5" x2="1472" y2="901.5"/><line x1="6" y1="921.5" x2="1472" y2="921.5"/><line x1="6" y1="941.5" x2="1472" y2="941.5"/><line x1="6" y1="960.5" x2="1472" y2="960.5"/><line x1="6" y1="980.5" x2="1472" y2="980.5"/><line x1="6" y1="999.5" x2="1472" y2="999.5"/></g><g fill="none" shape-rendering="crispEdges"><path d="M6.5,1005.5L7.5,1011.5L8.5,1014.5L9.5,1013.5L10.5,1010.5L11.5,1016.5L12.5,1013.5H13.5V1010.5H15.5V1012.5L16.5,1013.5L17.5,1006.5L18.5,1012.5L19.5,1015.5H20.5V1010.5H22.5V1013.5L23.5,1005.5L24.5,1011.5L25.5,1007.5L26.5,1015.5L27.5,1013.5H28.5V1009.5H30.5V1011.5L31.5,1014.5L32.5,1011.5L33.5,1005.5H34.5V1012.5H36.5V1011.5L37.5,1013.5L38.5,1012.5L39.5,1008.5L40.5,1012.5H41.5V1011.5H43.5V1005.5L44.5,1010.5H45.5V1012.5H47.5V1008.5L48.5,1007.5L49.5,1012.5L50.5,1013.5L51.5,1012.5L52.5,1011.5L53.5,1013.5L54.5,1010.5L55.5,1008.5L56.5,1010.5L57.5,1012.5L58.5,1008.5H59.5V1009.5H61.5V1014.5H62.5V1010.5H64.5V1008.5H66.5V1011.5L67.5,1012.5L68.5,1019.5L69.5,1008.5L70.5,1010.5L71.5,1009.5L72.5,1014.5L73.5,1009.5L74.5,1012.5L75.5,1011.5L76.5,1009.5L77.5,1012.5H78.5V1010.5H80.5V1013.5L81.5,1010.5L82.5,1011.5L83.5,1005.5L84.5,1010.5H85.5V1008.5H87.5V1012.5L88.5,1015.5L89.5,1012.5L90.5,1008.5L91.5,1012.5L92.5,1014.5L93.5,1009.5L94.5,1011.5L95.5,1008.5L96.5,1013.5L97.5,1012.5L98.5,1009.5L99.5,1014.5L100.5,1008.5H101.5V1009.5H103.5V1008.5L104.5,1011.5L105.5,1016.5L106.5,1009.5L107.5,1013.5L108.5,1011.5L109.5,1012.5H110.5V1009.5H112.5V1010.5H113.5V1008.5H115.5V1010.5L116.5,1012.5L117.5,1010.5H118.5V1012.5H120.5V1013.5L121.5,1012.5L122.5,1017.5L123.5,1006.5L124.5,1016.5L125.5,1010.5L126.5,1006.5L127.5,1011.5L128.5,1010.5L129.5,1008.5L130.5,1010.5H131.5V1012.5H133.5V1005.5L134.5,1010.5H135.5V1011.5H137.5V1006.5L138.5,1013.5L139.5,1007.5L140.5,1006.5L141.5,1004.5L142.5,1016.5L143.5,1010.5L144.5,1012.5L145.5,1013.5L146.5,1011.5L147.5,1007.5H148.5V1009.5H150.5V1010.5H154.5V1013.5H156.5V1007.5L157.5,1010.5L158.5,1012.5L159.5,1011.5L160.5,1013.5L161.5,1014.5L162.5,1011.5L163.5,1012.5H164.5V1009.5H166.5V1007.5L167.5,1005.5L168.5,1017.5L169.5,1009.5L170.5,1008.5L171.5,1012.5L172.5,1008.5H173.5V1012.5H175.5V1009.5H177.5V1010.5H178.5V1012.5H180.5V1009.5L181.5,1013.5H182.5V1014.5H184.5V1008.5L185.5,1011.5L186.5,1013.5L187.5,1009.5L188.5,1011.5L189.5,1008.5L190.5,1011.5L191.5,1009.5L192.5,1014.5H193.5V1009.5H195.5V1007.5L196.5,1006.5L197.5,1007.5L198.5,1012.5L199.5,1006.5L200.5,1011.5L201.5,1009.5L202.5,1012.5L203.5,1006.5L204.5,1013.5L205.5,1011.5L206.5,1008.5L207.5,1010.5H208.5V1007.5H210.5V1009.5L211.5,1011.5L212.5,1007.5L213.5,1014.5L214.5,1009.5L215.5,1012.5H216.5V1011.5H218.5V1010.5H220.5V1007.5L221.5,1010.5L222.5,1014.5L223.5,1012.5L224.5,1008.5L225.5,1010.5H226.5V1012.5H228.5V1013.5L229.5,1010.5L230.5,1013.5L231.5,1011.5L232.5,1013.5L233.5,1012.5L234.5,1008.5L235.5,1014.5L236.5,1012.5L237.5,1015.5L238.5,1016.5L239.5,1008.5L240.5,1006.5L241.5,1010.5L242.5,1009.5L243.5,1008.5L244.5,1013.5L245.5,1007.5L246.5,1009.5L247.5,1012.5L248.5,1011.5H249.5V1010.5H251.5V1007.5L252.5,1012.5H253.5V1013.5H255.5V1010.5L256.5,1009.5L257.5,1015.5L258.5,1010.5L259.5,1014.5L260.5,1009.5L261.5,1011.5L262.5,1008.5L263.5,1013.5L264.5,1007.5L265.5,1009.5H266.5V1011.5H268.5V1005.5H269.5V1008.5H271.5V1010.5L272.5,1011.5L273.5,1006.5L274.5,1010.5L275.5,1014.5L276.5,1011.5L277.5,1010.5L278.5,1013.5L279.5,1009.5L280.5,1011.5L281.5,1012.5L282.5,1009.5L283.5,1015.5L284.5,1012.5L285.5,1013.5H286.5V1011.5H289.5V1013.5L290.5,1009.5L291.5,1012.5L292.5,1009.5L293.5,1008.5L294.5,1009.5L295.5,1013.5H296.5V1010.5H298.5V1006.5L299.5,1008.5L300.5,1011.5L301.5,1013.5L302.5,1010.5L303.5,1009.5L304.5,1013.5L305.5,1010.5L306.5,1008.5L307.5,1010.5L308.5,1014.5L309.5,1015.5L310.5,1009.5L311.5,1014.5L312.5,1007.5L313.5,1013.5L314.5,1010.5L315.5,1011.5H316.5V1012.5H318.5V1010.5L319.5,1011.5L320.5,1010.5L321.5,1011.5L322.5,1013.5L323.5,1010.5L324.5,1013.5L325.5,1005.5L326.5,1012.5L327.5,1013.5L328.5,1009.5H329.5V1011.5H331.5V1008.5L332.5,1007.5L333.5,1012.5L334.5,1009.5L335.5,1010.5L336.5,1009.5L337.5,1007.5L338.5,1012.5L339.5,1007.5L340.5,1011.5L341.5,1010.5H342.5V1008.5H344.5V1006.5H345.5V1014.5H347.5V1016.5L348.5,1015.5L349.5,1009.5L350.5,1008.5L351.5,1009.5L352.5,1007.5L353.5,1011.5H354.5V1010.5H356.5V1009.5H358.5V1010.5L359.5,1007.5H360.5V1012.5H362.5V1011.5L363.5,1007.5L364.5,1004.5L365.5,1009.5L366.5,1011.5L367.5,1006.5L368.5,1009.5L369.5,1007.5L370.5,1013.5L371.5,1010.5H372.5V1011.5H375.5V1008.5L376.5,1011.5L377.5,1012.5L378.5,1007.5L379.5,1014.5L380.5,1015.5L381.5,1006.5L382.5,1008.5L383.5,1009.5L384.5,1011.5L385.5,1016.5L386.5,1012.5L387.5,1010.5L388.5,1011.5H389.5V1009.5H391.5V1008.5L392.5,1012.5L393.5,1010.5L394.5,1013.5L395.5,1004.5L396.5,1014.5L397.5,1008.5L398.5,1013.5L399.5,1009.5L400.5,1010.5L401.5,1014.5L402.5,1010.5L403.5,1012.5L404.5,1007.5H405.5V1010.5H407.5V1013.5L408.5,1005.5L409.5,1007.5H410.5V1010.5H412.5V1011.5L413.5,1007.5L414.5,1013.5L415.5,1011.5L416.5,1008.5L417.5,1007.5L418.5,1008.5L419.5,1013.5L420.5,1014.5L421.5,1013.5H422.5V1009.5H425.5V1014.5H427.5V1010.5L428.5,1007.5L429.5,1010.5L430.5,1005.5L431.5,1012.5L432.5,1010.5L433.5,1008.5L434.5,1005.5L435.5,1012.5L436.5,1011.5L437.5,1009.5L438.5,1014.5L439.5,1008.5H440.5V1010.5H443.5V1013.5L444.5,1012.5L445.5,1010.5L446.5,1011.5L447.5,1007.5H448.5V1009.5H450.5V1012.5L451.5,1009.5L452.5,1011.5H453.5V1009.5H455.5V1010.5L456.5,1014.5L457.5,1006.5L458.5,1011.5L459.5,1007.5L460.5,1009.5L461.5,1008.5L462.5,1009.5L463.5,1008.5L464.5,1010.5H465.5V1012.5H467.5V1011.5L468.5,1012.5L469.5,1016.5L470.5,1013.5L471.5,1009.5L472.5,1010.5H473.5V1011.5H475.5V1009.5L476.5,1011.5L477.5,1008.5L478.5,1012.5H479.5V1013.5H481.5V1008.5L482.5,1013.5L483.5,1007.5L484.5,1008.5L485.5,1009.5L486.5,1014.5H487.5V1012.5H489.5V1008.5L490.5,1014.5L491.5,1010.5L492.5,1004.5L493.5,1014.5L494.5,1005.5L495.5,1008.5L496.5,1012.5L497.5,1015.5L498.5,1005.5L499.5,1007.5L500.5,1011.5L501.5,1007.5L502.5,1009.5L503.5,1012.5H504.5V1011.5H506.5V1009.5L507.5,1010.5L508.5,1012.5L509.5,1007.5L510.5,1011.5L511.5,1016.5L512.5,1011.5L513.5,1010.5L514.5,1005.5L515.5,1009.5L516.5,1010.5L517.5,1007.5H518.5V1011.5H520.5V1006.5L521.5,1008.5L522.5,1005.5L523.5,1011.5H524.5V1010.5H526.5V1009.5L527.5,1012.5L528.5,1009.5L529.5,1007.5L530.5,1008.5L531.5,1011.5L532.5,1009.5L533.5,1012.5L534.5,1011.5L535.5,1015.5H536.5V1010.5H539.5V1008.5L540.5,1016.5L541.5,1013.5L542.5,1012.5L543.5,1014.5L544.5,1016.5L545.5,1010.5L546.5,1012.5L547.5,1014.5L548.5,1015.5H549.5V1010.5H551.5V1015.5L552.5,1008.5L553.5,1012.5L554.5,1009.5L555.5,1010.5L556.5,1007.5L557.5,1012.5L558.5,1007.5L559.5,1014.5L560.5,1007.5L561.5,1006.5L562.5,1014.5L563.5,1008.5L564.5,1010.5L565.5,1011.5L566.5,1007.5L567.5,1011.5L568.5,1014.5H569.5V1004.5H571.5V1003.5L572.5,1016.5L573.5,1006.5L574.5,1011.5L575.5,1009.5L576.5,1010.5L577.5,1016.5L578.5,1006.5L579.5,1013.5L580.5,1009.5L581.5,1013.5L582.5,1014.5L583.5,1010.5L584.5,1015.5L585.5,1012.5L586.5,1009.5H587.5V1010.5H589.5V1014.5L590.5,1010.5L591.5,1013.5L592.5,1011.5L593.5,1007.5H594.5V1011.5H597.5V1008.5L598.5,1014.5L599.5,1008.5L600.5,1013.5H601.5V1012.5H604.5V1013.5L605.5,1014.5L606.5,1008.5L607.5,1011.5L608.5,1008.5H609.5V1009.5H611.5V1011.5L612.5,1008.5L613.5,1010.5H614.5V1012.5H616.5V1008.5L617.5,1006.5L618.5,1009.5L619.5,1008.5L620.5,1006.5L621.5,1010.5L622.5,1012.5L623.5,1006.5L624.5,1009.5L625.5,1012.5L626.5,1010.5H627.5V1013.5H629.5V1009.5H630.5V1010.5H632.5V1011.5L633.5,1010.5L634.5,1012.5H635.5V1013.5H637.5V1011.5H639.5V1014.5H640.5V1010.5H642.5V1006.5L643.5,1013.5L644.5,1010.5L645.5,1013.5H646.5V1009.5H648.5V1007.5L649.5,1008.5L650.5,1011.5L651.5,1010.5L652.5,1017.5L653.5,1012.5L654.5,1005.5H655.5V1012.5H658.5V1010.5L659.5,1006.5L660.5,1008.5L661.5,1006.5L662.5,1012.5H663.5V1011.5H665.5V1012.5L666.5,1011.5L667.5,1008.5L668.5,1011.5L669.5,1009.5H670.5V1010.5H672.5V1008.5L673.5,1012.5L674.5,1007.5L675.5,1011.5L676.5,1006.5L677.5,1008.5L678.5,1012.5L679.5,1009.5L680.5,1015.5L681.5,1014.5L682.5,1007.5L683.5,1010.5L684.5,1009.5L685.5,1007.5L686.5,1004.5L687.5,1013.5L688.5,1012.5L689.5,1007.5L690.5,1008.5L691.5,1013.5H692.5V1010.5H695.5V1009.5L696.5,1010.5L697.5,1012.5L698.5,1009.5L699.5,1011.5L700.5,1006.5L701.5,1012.5L702.5,1011.5L703.5,1014.5L704.5,1010.5L705.5,1009.5L706.5,1010.5L707.5,1014.5L708.5,1010.5H709.5V1012.5H711.5V1009.5L712.5,1012.5L713.5,1008.5H714.5V1011.5H716.5V1010.5L717.5,1006.5L718.5,1011.5L719.5,1009.5L720.5,1010.5L721.5,1008.5H722.5V1011.5H724.5V1009.5L725.5,1010.5L726.5,1013.5L727.5,1012.5L728.5,1009.5L729.5,1010.5H730.5V1014.5H732.5V1007.5L733.5,1010.5H734.5V1007.5H736.5V1011.5L737.5,1007.5L738.5,1010.5L739.5,1006.5L740.5,1010.5L741.5,1008.5H742.5V1010.5H745.5V1013.5L746.5,1014.5L747.5,1013.5L748.5,1009.5L749.5,1015.5L750.5,1010.5L751.5,1012.5L752.5,1007.5L753.5,1010.5L754.5,1009.5L755.5,1014.5L756.5,1011.5L757.5,1010.5L758.5,1007.5L759.5,1012.5L760.5,1007.5L761.5,1013.5L762.5,1011.5L763.5,1008.5L764.5,1004.5H765.5V1010.5H768.5V1007.5L769.5,1008.5L770.5,1007.5L771.5,1009.5L772.5,1014.5L773.5,1007.5L774.5,1012.5L775.5,1009.5L776.5,1008.5L777.5,1006.5L778.5,1008.5L779.5,1014.5H780.5V1009.5H782.5V1013.5L783.5,1008.5L784.5,1015.5L785.5,1007.5L786.5,1014.5L787.5,1013.5L788.5,1014.5H789.5V1008.5H791.5V1005.5H792.5V1010.5H794.5V1009.5H795.5V1007.5H797.5V1011.5L798.5,1008.5L799.5,1012.5L800.5,1005.5L801.5,1012.5L802.5,1007.5L803.5,1005.5L804.5,1004.5L805.5,1005.5L806.5,1009.5L807.5,1011.5L808.5,1009.5L809.5,1015.5L810.5,1006.5L811.5,1008.5L812.5,1009.5L813.5,1008.5L814.5,1014.5L815.5,1013.5L816.5,1011.5L817.5,1010.5L818.5,1016.5L819.5,1010.5L820.5,1008.5L821.5,1009.5L822.5,1014.5H823.5V1010.5H825.5V1009.5L826.5,1012.5L827.5,1010.5L828.5,1008.5L829.5,1013.5L830.5,1009.5L831.5,1008.5L832.5,1010.5L833.5,1011.5L834.5,1013.5L835.5,1010.5L836.5,1008.5L837.5,1010.5L838.5,1014.5L839.5,1009.5L840.5,1014.5L841.5,1011.5L842.5,1007.5L843.5,1011.5L844.5,1010.5L845.5,1011.5L846.5,1008.5L847.5,1009.5L848.5,1012.5L849.5,1007.5L850.5,1012.5L851.5,1010.5L852.5,1009.5L853.5,1008.5L854.5,1011.5L855.5,1013.5L856.5,1012.5L857.5,1009.5H858.5V1011.5H860.5V1008.5L861.5,1013.5L862.5,1010.5L863.5,1008.5H864.5V1007.5H866.5V1012.5L867.5,1009.5L868.5,1015.5H869.5V1010.5H871.5V1008.5L872.5,1015.5L873.5,1010.5L874.5,1012.5L875.5,1007.5L876.5,1013.5L877.5,1016.5L878.5,1008.5L879.5,1010.5L880.5,1005.5H881.5V1006.5H883.5V1008.5L884.5,1010.5L885.5,1007.5L886.5,1009.5L887.5,1011.5L888.5,1008.5L889.5,1001.5H890.5V1007.5H892.5V1009.5L893.5,1008.5L894.5,1011.5L895.5,1010.5L896.5,1011.5L897.5,1008.5L898.5,1011.5L899.5,1008.5L900.5,1012.5L901.5,1006.5L902.5,1010.5L903.5,1011.5L904.5,1009.5L905.5,1010.5L906.5,1009.5L907.5,1010.5L908.5,1013.5L909.5,1011.5L910.5,1013.5L911.5,1011.5L912.5,1007.5L913.5,1010.5H914.5V1009.5H917.5V1011.5H919.5V1007.5L920.5,1014.5L921.5,1004.5L922.5,1014.5L923.5,1010.5L924.5,1016.5H925.5V1011.5H927.5V1006.5L928.5,1009.5H929.5V1008.5H931.5V1011.5L932.5,1009.5L933.5,1010.5L934.5,1008.5L935.5,1017.5L936.5,1004.5L937.5,1008.5L938.5,1011.5L939.5,1009.5L940.5,1010.5L941.5,1011.5H942.5V1014.5H944.5V1007.5L945.5,1011.5L946.5,1013.5L947.5,1009.5L948.5,1008.5L949.5,1007.5L950.5,1009.5L951.5,1013.5L952.5,1007.5H953.5V1011.5H955.5V1008.5L956.5,1011.5L957.5,1005.5H958.5V1012.5H960.5V1011.5L961.5,1005.5L962.5,1011.5L963.5,1012.5L964.5,1009.5L965.5,1010.5H966.5V1012.5H968.5V1009.5L969.5,1007.5L970.5,1008.5L971.5,1010.5L972.5,1011.5L973.5,1007.5L974.5,1010.5L975.5,1012.5L976.5,1007.5L977.5,1012.5L978.5,1011.5L979.5,1007.5H980.5V1010.5H982.5V1009.5H984.5V1003.5H985.5V1010.5H988.5V1007.5L989.5,1010.5H990.5V1009.5H992.5V1010.5L993.5,1005.5L994.5,1011.5L995.5,1009.5L996.5,1013.5L997.5,1009.5L998.5,1014.5L999.5,1005.5H1000.5V1008.5H1002.5V1011.5L1003.5,1005.5L1004.5,1009.5L1005.5,1006.5L1006.5,1012.5L1007.5,1011.5L1008.5,1012.5H1009.5V1013.5H1011.5V1012.5L1012.5,1004.5L1013.5,1011.5H1014.5V1010.5H1016.5V1006.5L1017.5,1009.5L1018.5,1008.5L1019.5,1012.5L1020.5,1015.5H1021.5V1010.5H1023.5V1012.5L1024.5,1011.5L1025.5,1002.5L1026.5,1008.5L1027.5,1014.5L1028.5,1009.5L1029.5,1006.5H1030.5V1010.5H1032.5V1013.5L1033.5,1007.5H1034.5V1006.5H1036.5V1007.5H1038.5V1013.5L1039.5,1010.5L1040.5,1012.5L1041.5,1010.5L1042.5,1009.5L1043.5,1012.5L1044.5,1004.5L1045.5,1005.5L1046.5,1000.5L1047.5,1011.5L1048.5,1010.5L1049.5,1011.5L1050.5,1007.5L1051.5,1011.5L1052.5,1013.5L1053.5,1011.5L1054.5,1012.5L1055.5,1007.5L1056.5,1009.5L1057.5,1007.5L1058.5,1010.5L1059.5,1012.5L1060.5,1009.5L1061.5,1013.5L1062.5,1014.5L1063.5,1011.5L1064.5,1009.5L1065.5,1007.5L1066.5,1014.5L1067.5,1009.5L1068.5,1015.5L1069.5,1001.5L1070.5,1006.5L1071.5,1004.5L1072.5,1009.5L1073.5,1011.5L1074.5,1012.5L1075.5,1007.5L1076.5,1017.5L1077.5,1008.5L1078.5,1010.5H1079.5V1008.5H1081.5V1010.5L1082.5,1008.5L1083.5,1013.5L1084.5,1008.5L1085.5,1006.5L1086.5,1010.5L1087.5,1006.5L1088.5,1011.5H1089.5V1007.5H1091.5V1006.5L1092.5,1007.5L1093.5,1011.5L1094.5,1009.5L1095.5,1011.5L1096.5,1010.5L1097.5,1008.5L1098.5,1010.5L1099.5,1006.5L1100.5,1011.5L1101.5,1007.5L1102.5,1006.5H1103.5V1010.5H1105.5V1008.5L1106.5,1007.5L1107.5,1006.5L1108.5,1013.5L1109.5,1011.5L1110.5,1012.5L1111.5,1008.5L1112.5,1009.5L1113.5,1008.5H1114.5V1012.5H1116.5V1007.5L1117.5,1003.5L1118.5,1006.5L1119.5,1008.5L1120.5,1006.5L1121.5,1009.5L1122.5,1011.5L1123.5,1012.5L1124.5,1013.5L1125.5,1010.5L1126.5,1007.5L1127.5,1008.5L1128.5,1009.5L1129.5,1010.5L1130.5,1007.5L1131.5,1011.5L1132.5,1012.5L1133.5,1011.5L1134.5,1014.5L1135.5,1010.5L1136.5,1011.5L1137.5,1008.5L1138.5,1012.5L1139.5,1011.5H1140.5V1010.5H1142.5V1006.5L1143.5,1012.5L1144.5,1006.5L1145.5,1008.5L1146.5,1007.5L1147.5,1006.5L1148.5,1009.5L1149.5,1008.5L1150.5,1010.5L1151.5,1008.5L1152.5,1009.5H1153.5V1011.5H1155.5V1006.5L1156.5,1014.5L1157.5,1006.5L1158.5,1010.5L1159.5,1009.5H1160.5V1006.5H1162.5V1011.5L1163.5,1007.5L1164.5,1008.5L1165.5,1016.5L1166.5,1011.5H1167.5V1009.5H1169.5V1011.5L1170.5,1014.5L1171.5,1010.5L1172.5,1009.5L1173.5,1004.5L1174.5,1012.5L1175.5,1005.5L1176.5,1008.5L1177.5,1010.5L1178.5,1011.5L1179.5,1013.5L1180.5,1008.5L1181.5,1006.5L1182.5,1010.5L1183.5,1011.5L1184.5,1008.5L1185.5,1007.5L1186.5,1014.5L1187.5,1010.5L1188.5,1007.5L1189.5,1011.5L1190.5,1013.5L1191.5,1008.5L1192.5,1009.5L1193.5,1006.5L1194.5,1012.5H1195.5V1011.5H1197.5V1013.5L1198.5,1009.5H1199.5V1008.5H1204.5V1011.5L1205.5,1014.5L1206.5,1010.5L1207.5,1012.5L1208.5,1010.5L1209.5,1012.5L1210.5,1009.5L1211.5,1010.5L1212.5,1012.5L1213.5,1011.5L1214.5,1009.5L1215.5,1013.5L1216.5,1014.5L1217.5,1010.5L1218.5,1006.5L1219.5,1010.5L1220.5,1006.5L1221.5,1011.5L1222.5,1015.5L1223.5,1017.5L1224.5,1012.5L1225.5,1011.5H1226.5V1009.5H1228.5V1010.5L1229.5,1007.5L1230.5,1015.5L1231.5,1008.5L1232.5,1007.5L1233.5,1011.5L1234.5,1008.5L1235.5,1011.5L1236.5,1006.5L1237.5,1011.5L1238.5,1008.5L1239.5,1011.5L1240.5,1006.5L1241.5,1008.5L1242.5,1010.5L1243.5,1009.5L1244.5,1004.5L1245.5,1012.5H1246.5V1010.5H1248.5V1015.5L1249.5,1012.5L1250.5,1011.5L1251.5,1012.5L1252.5,1011.5L1253.5,1007.5H1254.5V1008.5H1256.5V1010.5H1258.5V1012.5L1259.5,1016.5L1260.5,1010.5L1261.5,1011.5L1262.5,1013.5L1263.5,1009.5L1264.5,1007.5L1265.5,1006.5L1266.5,1008.5H1267.5V1011.5H1269.5V1008.5H1273.5V1006.5L1274.5,1008.5L1275.5,1012.5H1276.5V1010.5H1279.5V1015.5L1280.5,1010.5L1281.5,1012.5L1282.5,1007.5L1283.5,1005.5L1284.5,1009.5H1285.5V1012.5H1287.5V1011.5L1288.5,1005.5L1289.5,1008.5L1290.5,1011.5H1291.5V1010.5H1293.5V1009.5L1294.5,1007.5L1295.5,1011.5L1296.5,1010.5H1297.5V1008.5H1299.5V1007.5L1300.5,1006.5L1301.5,1010.5L1302.5,1014.5L1303.5,1011.5L1304.5,1008.5L1305.5,1012.5L1306.5,1009.5L1307.5,1014.5H1308.5V1009.5H1310.5V1011.5L1311.5,1009.5L1312.5,1006.5H1313.5V1010.5H1315.5V1007.5H1317.5V1006.5L1318.5,1011.5L1319.5,1008.5L1320.5,1012.5H1321.5V1008.5H1323.5V1015.5L1324.5,1012.5L1325.5,1006.5H1326.5V1008.5H1328.5V1005.5L1329.5,1007.5L1330.5,1010.5L1331.5,1003.5L1332.5,1009.5L1333.5,1012.5L1334.5,1007.5L1335.5,1012.5L1336.5,1014.5L1337.5,1006.5L1338.5,1012.5L1339.5,1008.5H1340.5V1010.5H1345.5V1014.5L1346.5,1009.5L1347.5,1011.5L1348.5,1012.5L1349.5,1015.5L1350.5,1010.5L1351.5,1011.5L1352.5,1004.5H1353.5V1006.5H1355.5V1009.5L1356.5,1011.5L1357.5,1012.5L1358.5,1008.5L1359.5,1006.5L1360.5,1011.5L1361.5,1006.5L1362.5,1009.5L1363.5,1010.5L1364.5,1008.5H1365.5V1006.5H1367.5V1007.5L1368.5,1013.5L1369.5,1011.5L1370.5,1007.5L1371.5,1010.5L1372.5,1006.5H1373.5V1010.5H1375.5V1012.5L1376.5,1010.5L1377.5,1007.5L1378.5,1012.5L1379.5,1008.5L1380.5,1011.5L1381.5,1007.5L1382.5,1012.5L1383.5,1010.5L1384.5,1016.5L1385.5,1006.5L1386.5,1012.5H1387.5V1011.5H1389.5V1007.5L1390.5,1008.5L1391.5,1006.5H1392.5V1012.5H1394.5V1010.5L1395.5,1011.5L1396.5,1010.5L1397.5,1009.5L1398.5,1010.5L1399.5,1014.5L1400.5,1011.5L1401.5,1009.5L1402.5,1010.5L1403.5,1011.5L1404.5,1004.5L1405.5,1011.5L1406.5,1008.5L1407.5,1007.5L1408.5,1011.5L1409.5,1007.5L1410.5,1009.5H1411.5V1007.5H1413.5V1011.5L1414.5,1009.5L1415.5,1012.5L1416.5,1008.5L1417.5,1009.5L1418.5,1005.5L1419.5,1006.5L1420.5,1010.5L1421.5,1008.5L1422.5,1010.5L1423.5,1008.5L1424.5,1009.5L1425.5,1010.5L1426.5,1009.5L1427.5,1010.5L1428.5,1011.5L1429.5,1008.5L1430.5,1012.5H1431.5V1010.5H1433.5V1011.5H1435.5V1013.5H1436.5V1008.5H1438.5V1013.5L1439.5,1012.5L1440.5,1009.5L1441.5,1010.5H1442.5V1009.5H1444.5V1007.5H1445.5V1008.5H1447.5V1009.5L1448.5,1005.5L1449.5,1010.5L1450.5,1011.5L1451.5,1012.5L1452.5,1008.5L1453.5,1006.5H1454.5V1008.5H1457.5V1011.5H1461.5V1012.5H1462.5V1010.5H1464.5V1012.5L1465.5,1010.5L1466.5,1009.5L1467.5,1011.5H1468.5V1009.5H1470.5V1007.5H1471.5" stroke="#00ff00" stroke-width="1"/><rect x="84.0" y="961.0" width="1" height="51.0" fill="#00ff00" stroke="none"/><rect x="85.0" y="975.0" width="1" height="37.0" fill="#00ff00" stroke="none"/><rect x="103.0" y="961.0" width="1" height="51.0" fill="#00ff00" stroke="none"/><rect x="104.0" y="966.0" width="1" height="46.0" fill="#00ff00" stroke="none"/><rect x="55.0" y="979.0" width="1" height="33.0" fill="#00ff00" stroke="none"/><rect x="65.0" y="977.0" width="1" height="35.0" fill="#00ff00" stroke="none"/><rect x="45.0" y="992.0" width="1" height="20.0" fill="#00ff00" stroke="none"/><rect x="122.0" y="976.0" width="1" height="36.0" fill="#00ff00" stroke="none"/><rect x="123.0" y="990.0" width="1" height="22.0" fill="#00ff00" stroke="none"/><rect x="132.0" y="982.0" width="1" height="30.0" fill="#00ff00" stroke="none"/><rect x="131.0" y="992.0" width="1" height="20.0" fill="#00ff00" stroke="none"/><rect x="141.0" y="994.0" width="1" height="18.0" fill="#00ff00" stroke="none"/><rect x="854.0" y="993.0" width="1" height="19.0" fill="#00ff00" stroke="none"/><rect x="873.0" y="971.0" width="1" height="41.0" fill="#00ff00" stroke="none"/><rect x="183.0" y="1000.0" width="1" height="12.0" fill="#00ff00" stroke="none"/><rect x="864.0" y="971.0" width="1" height="41.0" fill="#00ff00" stroke="none"/><rect x="874.0" y="1001.0" width="1" height="11.0" fill="#00ff00" stroke="none"/><rect x="878.0" y="1001.0" width="1" height="11.0" fill="#00ff00" stroke="none"/><rect x="883.0" y="1001.0" width="1" height="11.0" fill="#00ff00" stroke="none"/><path d="M6.5,1009.5L7.5,1017.5L8.5,1007.5L9.5,1008.5L10.5,1010.5L11.5,1012.5L12.5,1014.5L13.5,1009.5L14.5,1007.5L15.5,1009.5L16.5,1013.5L17.5,1010.5L18.5,1009.5L19.5,1008.5L20.5,1013.5H21.5V1011.5H23.5V1012.5L24.5,1009.5L25.5,1010.5L26.5,1008.5H27.5V1010.5H29.5V1015.5L30.5,1008.5L31.5,1011.5H32.5V1012.5H34.5V1011.5L35.5,1010.5L36.5,1007.5L37.5,1006.5L38.5,1008.5L39.5,1011.5L40.5,1012.5L41.5,1010.5L42.5,1008.5L43.5,1013.5L44.5,1011.5L45.5,1015.5L46.5,1016.5H47.5V1011.5H49.5V1012.5L50.5,1010.5L51.5,1007.5L52.5,1011.5L53.5,1009.5L54.5,1010.5L55.5,1011.5L56.5,1013.5H57.5V1008.5H59.5V1006.5L60.5,1014.5L61.5,1016.5L62.5,1011.5L63.5,1008.5L64.5,1014.5L65.5,1009.5L66.5,1015.5L67.5,1010.5L68.5,1014.5L69.5,1010.5L70.5,1009.5L71.5,1012.5L72.5,1011.5L73.5,1009.5L74.5,1011.5L75.5,1007.5H76.5V1008.5H78.5V1011.5L79.5,1012.5L80.5,1011.5L81.5,1012.5L82.5,1008.5L83.5,1010.5L84.5,1012.5L85.5,1006.5L86.5,1011.5L87.5,1009.5L88.5,1013.5L89.5,1007.5L90.5,1012.5H91.5V1011.5H93.5V1010.5L94.5,1013.5L95.5,1012.5L96.5,1009.5L97.5,1008.5L98.5,1013.5L99.5,1015.5L100.5,1009.5L101.5,1012.5L102.5,1010.5L103.5,1008.5L104.5,1011.5L105.5,1012.5L106.5,1008.5L107.5,1010.5L108.5,1007.5L109.5,1010.5L110.5,1001.5L111.5,1013.5L112.5,1011.5L113.5,1018.5L114.5,1005.5L115.5,1010.5L116.5,1009.5L117.5,1010.5L118.5,1009.5L119.5,1013.5L120.5,1014.5L121.5,1011.5L122.5,1016.5L123.5,1011.5L124.5,1009.5L125.5,1012.5H126.5V1008.5H128.5V1011.5H130.5V1010.5L131.5,1009.5L132.5,1010.5L133.5,1011.5L134.5,1012.5H135.5V1009.5H137.5V1014.5L138.5,1009.5L139.5,1008.5L140.5,1010.5L141.5,1008.5L142.5,1016.5L143.5,1011.5L144.5,1007.5L145.5,1014.5L146.5,1009.5L147.5,1010.5L148.5,1013.5H149.5V1011.5H151.5V1006.5L152.5,1008.5H153.5V1007.5H155.5V1012.5L156.5,1014.5L157.5,1011.5L158.5,1015.5H159.5V1010.5H161.5V1008.5L162.5,1010.5L163.5,1008.5L164.5,1011.5L165.5,1009.5L166.5,1008.5L167.5,1009.5L168.5,1010.5L169.5,1006.5L170.5,1011.5L171.5,1009.5L172.5,1012.5L173.5,1011.5L174.5,1008.5L175.5,1006.5L176.5,1009.5L177.5,1014.5L178.5,1012.5L179.5,1010.5L180.5,1016.5L181.5,1015.5H182.5V1009.5H184.5V1013.5L185.5,1009.5L186.5,1006.5L187.5,1007.5L188.5,1011.5L189.5,1010.5L190.5,1007.5L191.5,1014.5L192.5,1010.5L193.5,1011.5L194.5,1009.5L195.5,1013.5L196.5,1012.5L197.5,1009.5L198.5,1007.5L199.5,1012.5L200.5,1011.5L201.5,1012.5L202.5,1010.5L203.5,1015.5L204.5,1011.5L205.5,1006.5H206.5V1009.5H208.5V1013.5L209.5,1012.5L210.5,1013.5H211.5V1008.5H213.5V1005.5L214.5,1009.5L215.5,1006.5L216.5,1009.5L217.5,1013.5L218.5,1012.5L219.5,1007.5L220.5,1006.5H221.5V1009.5H223.5V1008.5L224.5,1013.5H225.5V1008.5H227.5V1009.5L228.5,1010.5L229.5,1012.5H230.5V1005.5H232.5V1008.5L233.5,1011.5L234.5,1012.5L235.5,1011.5L236.5,1013.5L237.5,1014.5L238.5,1007.5L239.5,1011.5L240.5,1006.5L241.5,1008.5L242.5,1014.5L243.5,1012.5L244.5,1008.5L245.5,1012.5L246.5,1010.5L247.5,1011.5L248.5,1006.5L249.5,1011.5L250.5,1012.5L251.5,1010.5L252.5,1007.5L253.5,1018.5H254.5V1015.5H256.5V1009.5H258.5V1011.5L259.5,1009.5L260.5,1010.5L261.5,1008.5L262.5,1004.5L263.5,1012.5L264.5,1011.5L265.5,1010.5L266.5,1011.5L267.5,1013.5H268.5V1008.5H270.5V1007.5L271.5,1014.5L272.5,1008.5L273.5,1009.5H274.5V1012.5H277.5V1011.5L278.5,1012.5L279.5,1009.5L280.5,1005.5L281.5,1011.5L282.5,1014.5H283.5V1011.5H285.5V1013.5L286.5,1012.5L287.5,1008.5H288.5V1012.5H291.5V1009.5L292.5,1014.5L293.5,1009.5L294.5,1011.5L295.5,1009.5L296.5,1012.5L297.5,1015.5L298.5,1011.5L299.5,1013.5L300.5,1010.5L301.5,1011.5L302.5,1009.5L303.5,1010.5L304.5,1013.5L305.5,1012.5H306.5V1010.5H309.5V1014.5L310.5,1010.5L311.5,1011.5L312.5,1013.5L313.5,1006.5H314.5V1007.5H316.5V1011.5H318.5V1013.5L319.5,1009.5L320.5,1010.5L321.5,1009.5L322.5,1012.5L323.5,1006.5L324.5,1013.5L325.5,1014.5L326.5,1013.5L327.5,1010.5L328.5,1015.5L329.5,1012.5H330.5V1009.5H332.5V1012.5L333.5,1010.5L334.5,1008.5H335.5V1009.5H337.5V1006.5L338.5,1008.5L339.5,1009.5L340.5,1008.5L341.5,1012.5L342.5,1009.5L343.5,1007.5L344.5,1009.5L345.5,1012.5L346.5,1011.5L347.5,1018.5H348.5V1010.5H350.5V1004.5L351.5,1009.5L352.5,1013.5L353.5,1012.5L354.5,1009.5L355.5,1004.5L356.5,1010.5L357.5,1007.5H358.5V1013.5H360.5V1012.5L361.5,1008.5H362.5V1011.5H364.5V1014.5L365.5,1009.5L366.5,1010.5L367.5,1007.5L368.5,1011.5L369.5,1004.5L370.5,1011.5L371.5,1012.5L372.5,1011.5L373.5,1013.5L374.5,1009.5L375.5,1014.5L376.5,1018.5H377.5V1011.5H379.5V1012.5L380.5,1016.5H381.5V1009.5H383.5V1012.5H384.5V1011.5H386.5V1007.5L387.5,1009.5L388.5,1012.5L389.5,1010.5L390.5,1017.5H391.5V1012.5H393.5V1007.5L394.5,1010.5L395.5,1008.5H396.5V1010.5H398.5V1009.5L399.5,1010.5L400.5,1004.5L401.5,1013.5L402.5,1008.5L403.5,1009.5L404.5,1012.5L405.5,1011.5L406.5,1014.5H407.5V1009.5H409.5V1008.5L410.5,1015.5L411.5,1007.5L412.5,1011.5L413.5,1013.5L414.5,1011.5L415.5,1005.5L416.5,1014.5L417.5,1007.5L418.5,1010.5L419.5,1009.5L420.5,1008.5L421.5,1011.5L422.5,1007.5H423.5V1011.5H426.5V1013.5L427.5,1006.5L428.5,1010.5L429.5,1014.5L430.5,1009.5L431.5,1014.5L432.5,1011.5L433.5,1008.5L434.5,1011.5L435.5,1013.5L436.5,1009.5L437.5,1011.5L438.5,1008.5L439.5,1015.5L440.5,1010.5L441.5,1014.5L442.5,1008.5L443.5,1012.5L444.5,1013.5L445.5,1015.5L446.5,1010.5L447.5,1014.5L448.5,1011.5L449.5,1010.5L450.5,1005.5L451.5,1015.5H452.5V1008.5H454.5V1012.5L455.5,1010.5L456.5,1011.5L457.5,1009.5L458.5,1007.5H459.5V1011.5H461.5V1009.5L462.5,1007.5L463.5,1011.5L464.5,1007.5H465.5V1011.5H467.5V1007.5L468.5,1008.5L469.5,1010.5H470.5V1008.5H473.5V1009.5H474.5V1008.5H476.5V1011.5L477.5,1010.5L478.5,1012.5L479.5,1007.5L480.5,1005.5L481.5,1012.5L482.5,1010.5L483.5,1011.5L484.5,1010.5L485.5,1009.5L486.5,1005.5L487.5,1010.5L488.5,1014.5H489.5V1012.5H491.5V1007.5L492.5,1013.5L493.5,1011.5L494.5,1007.5L495.5,1010.5L496.5,1013.5L497.5,1014.5L498.5,1008.5L499.5,1010.5L500.5,1014.5L501.5,1010.5L502.5,1006.5L503.5,1014.5L504.5,1006.5L505.5,1009.5L506.5,1011.5L507.5,1008.5L508.5,1007.5L509.5,1010.5L510.5,1009.5L511.5,1012.5L512.5,1009.5L513.5,1013.5L514.5,1012.5L515.5,1009.5L516.5,1008.5L517.5,1009.5L518.5,1010.5L519.5,1009.5L520.5,1011.5L521.5,1009.5L522.5,1011.5H523.5V1009.5H526.5V1012.5L527.5,1014.5L528.5,1008.5L529.5,1007.5L530.5,1006.5L531.5,1011.5L532.5,1014.5L533.5,1009.5L534.5,1010.5H535.5V1008.5H537.5V1013.5H539.5V1010.5L540.5,1012.5L541.5,1004.5L542.5,1009.5H543.5V1007.5H546.5V1011.5L547.5,1008.5L548.5,1012.5L549.5,1013.5L550.5,1014.5H551.5V1008.5H553.5V1007.5H554.5V1010.5H558.5V1014.5L559.5,1012.5L560.5,1011.5L561.5,1010.5L562.5,1007.5L563.5,1009.5L564.5,1007.5L565.5,1012.5L566.5,1010.5L567.5,1011.5L568.5,1007.5L569.5,1013.5L570.5,1011.5L571.5,1010.5L572.5,1011.5L573.5,1007.5L574.5,1010.5L575.5,1008.5L576.5,1006.5L577.5,1011.5L578.5,1008.5H579.5V1009.5H582.5V1011.5L583.5,1018.5L584.5,1010.5L585.5,1011.5H586.5V1007.5H588.5V1008.5L589.5,1007.5L590.5,1008.5L591.5,1007.5L592.5,1010.5L593.5,1008.5H594.5V1009.5H596.5V1007.5L597.5,1009.5L598.5,1010.5L599.5,1011.5L600.5,1012.5H601.5V1011.5H603.5V1007.5L604.5,1008.5L605.5,1011.5L606.5,1010.5L607.5,1014.5L608.5,1012.5L609.5,1006.5H610.5V1010.5H612.5V1009.5L613.5,1013.5L614.5,1010.5L615.5,1012.5L616.5,1007.5L617.5,1008.5L618.5,1014.5H619.5V1010.5H622.5V1013.5H624.5V1011.5H625.5V1010.5H628.5V1008.5L629.5,1012.5L630.5,1008.5L631.5,1009.5L632.5,1012.5L633.5,1008.5L634.5,1007.5L635.5,1017.5L636.5,1012.5L637.5,1006.5L638.5,1008.5L639.5,1011.5L640.5,1009.5L641.5,1014.5H642.5V1009.5H644.5V1010.5L645.5,1009.5L646.5,1014.5L647.5,1010.5L648.5,1006.5L649.5,1009.5L650.5,1011.5L651.5,1009.5L652.5,1011.5L653.5,1010.5L654.5,1005.5L655.5,1009.5L656.5,1010.5L657.5,1012.5L658.5,1014.5L659.5,1011.5L660.5,1014.5L661.5,1015.5L662.5,1013.5L663.5,1009.5L664.5,1010.5L665.5,1008.5L666.5,1007.5L667.5,1010.5H668.5V1008.5H670.5V1002.5L671.5,1008.5L672.5,1010.5L673.5,1009.5L674.5,1011.5L675.5,1013.5L676.5,1011.5L677.5,1008.5L678.5,1011.5L679.5,1010.5L680.5,1015.5L681.5,1006.5H682.5V1009.5H685.5V1011.5L686.5,1012.5L687.5,1007.5H688.5V1011.5H690.5V1008.5L691.5,1013.5L692.5,1011.5L693.5,1009.5L694.5,1010.5L695.5,1007.5L696.5,1012.5L697.5,1013.5L698.5,1009.5L699.5,1012.5L700.5,1003.5L701.5,1011.5L702.5,1009.5L703.5,1013.5L704.5,1009.5L705.5,1012.5L706.5,1007.5L707.5,1010.5L708.5,1007.5L709.5,1008.5L710.5,1011.5L711.5,1013.5L712.5,1008.5L713.5,1010.5L714.5,1009.5H715.5V1012.5H717.5V1011.5L718.5,1006.5L719.5,1009.5L720.5,1011.5L721.5,1013.5L722.5,1011.5L723.5,1007.5L724.5,1013.5L725.5,1006.5L726.5,1008.5H727.5V1012.5H730.5V1011.5H731.5V1006.5H733.5V1010.5H735.5V1011.5L736.5,1009.5L737.5,1012.5L738.5,1006.5L739.5,1012.5L740.5,1007.5L741.5,1012.5L742.5,1009.5L743.5,1008.5H744.5V1012.5H746.5V1008.5L747.5,1006.5L748.5,1015.5L749.5,1011.5L750.5,1009.5L751.5,1008.5L752.5,1010.5L753.5,1009.5L754.5,1011.5H755.5V1009.5H757.5V1008.5L758.5,1002.5H759.5V1009.5H763.5V1011.5L764.5,1010.5L765.5,1007.5L766.5,1009.5L767.5,1010.5L768.5,1008.5L769.5,1012.5L770.5,1009.5H771.5V1012.5H773.5V1013.5L774.5,1011.5H775.5V1007.5H777.5V1011.5L778.5,1012.5L779.5,1009.5L780.5,1014.5L781.5,1015.5L782.5,1011.5H783.5V1006.5H785.5V1015.5L786.5,1010.5L787.5,1009.5L788.5,1013.5L789.5,1006.5L790.5,1012.5L791.5,1008.5L792.5,1009.5L793.5,1006.5L794.5,1012.5L795.5,1008.5H796.5V1014.5H798.5V1009.5L799.5,1007.5L800.5,1008.5L801.5,1010.5L802.5,1012.5L803.5,1006.5L804.5,1005.5L805.5,1010.5L806.5,1009.5L807.5,1011.5L808.5,1013.5L809.5,1012.5L810.5,1010.5L811.5,1009.5L812.5,1012.5L813.5,1008.5L814.5,1009.5L815.5,1005.5L816.5,1007.5L817.5,1011.5L818.5,1008.5L819.5,1010.5L820.5,1009.5L821.5,1007.5L822.5,1008.5L823.5,1004.5H824.5V1010.5H826.5V1008.5L827.5,1009.5L828.5,1008.5L829.5,1016.5H830.5V1009.5H832.5V1016.5L833.5,1008.5L834.5,1012.5L835.5,1008.5L836.5,1011.5L837.5,1009.5L838.5,1007.5L839.5,1009.5L840.5,1008.5L841.5,1004.5L842.5,1008.5L843.5,1009.5L844.5,1006.5L845.5,1013.5L846.5,1007.5L847.5,1008.5L848.5,1010.5L849.5,1009.5L850.5,1006.5L851.5,1008.5L852.5,1013.5L853.5,1007.5L854.5,1014.5L855.5,1007.5L856.5,1005.5L857.5,1009.5L858.5,1012.5L859.5,1011.5L860.5,1009.5H861.5V1006.5H863.5V1010.5H864.5V1011.5H866.5V1006.5L867.5,1011.5H868.5V1010.5H870.5V1008.5L871.5,1009.5L872.5,1016.5L873.5,1017.5L874.5,1009.5L875.5,1010.5L876.5,1007.5L877.5,1010.5H878.5V1011.5H880.5V1008.5L881.5,1015.5L882.5,1014.5L883.5,1012.5L884.5,1009.5H885.5V1010.5H887.5V1006.5L888.5,1007.5H889.5V1012.5H891.5V1009.5L892.5,1012.5L893.5,1015.5L894.5,1009.5L895.5,1005.5L896.5,1011.5L897.5,1008.5L898.5,1014.5L899.5,1006.5L900.5,1005.5H901.5V1007.5H903.5V1009.5H905.5V1002.5L906.5,1008.5L907.5,1012.5L908.5,1007.5L909.5,1013.5L910.5,1009.5H911.5V1010.5H913.5V1011.5L914.5,1009.5L915.5,1008.5L916.5,1007.5L917.5,1008.5L918.5,1012.5L919.5,1007.5L920.5,1014.5L921.5,1012.5L922.5,1009.5L923.5,1011.5H924.5V1010.5H926.5V1013.5L927.5,1008.5H928.5V1009.5H930.5V1011.5L931.5,1015.5L932.5,1008.5L933.5,1015.5L934.5,1012.5L935.5,1011.5L936.5,1010.5L937.5,1009.5L938.5,1008.5L939.5,1007.5L940.5,1009.5L941.5,1010.5L942.5,1011.5L943.5,1013.5L944.5,1011.5L945.5,1007.5L946.5,1010.5L947.5,1011.5L948.5,1008.5L949.5,1010.5L950.5,1007.5L951.5,1004.5L952.5,1007.5L953.5,1013.5L954.5,1012.5L955.5,1008.5H956.5V1009.5H958.5V1008.5L959.5,1009.5L960.5,1012.5L961.5,1008.5L962.5,1012.5L963.5,1006.5L964.5,1012.5H965.5V1010.5H967.5V1012.5L968.5,1011.5L969.5,1009.5L970.5,1007.5L971.5,1008.5L972.5,1011.5H973.5V1010.5H976.5V1011.5L977.5,1004.5H978.5V1010.5H980.5V1006.5L981.5,1007.5L982.5,1009.5L983.5,1011.5L984.5,1006.5H985.5V1010.5H987.5V1011.5L988.5,1007.5L989.5,1011.5L990.5,1012.5H991.5V1009.5H994.5V1011.5L995.5,1007.5L996.5,1008.5L997.5,1007.5L998.5,1009.5L999.5,1012.5L1000.5,1013.5L1001.5,1009.5L1002.5,1008.5L1003.5,1009.5L1004.5,1012.5L1005.5,1010.5L1006.5,1007.5L1007.5,1011.5L1008.5,1010.5L1009.5,1012.5L1010.5,1011.5L1011.5,1004.5L1012.5,1011.5L1013.5,1010.5L1014.5,1012.5L1015.5,1006.5L1016.5,1014.5L1017.5,1011.5L1018.5,1009.5L1019.5,1008.5L1020.5,1007.5L1021.5,1008.5L1022.5,1005.5L1023.5,1008.5L1024.5,1006.5H1025.5V1010.5H1027.5V1006.5L1028.5,1005.5L1029.5,1007.5L1030.5,1008.5L1031.5,1010.5L1032.5,1005.5H1033.5V1007.5H1035.5V1010.5L1036.5,1008.5L1037.5,1010.5L1038.5,1011.5H1039.5V1009.5H1041.5V1012.5L1042.5,1011.5H1043.5V1012.5H1045.5V1003.5L1046.5,1011.5H1047.5V1012.5H1049.5V1006.5H1051.5V1004.5L1052.5,1009.5L1053.5,1008.5L1054.5,1005.5L1055.5,1008.5L1056.5,1007.5L1057.5,1015.5H1058.5V1010.5H1060.5V1008.5L1061.5,1006.5H1062.5V1009.5H1064.5V1012.5H1066.5V1011.5L1067.5,1006.5L1068.5,1007.5L1069.5,1009.5L1070.5,1007.5L1071.5,1010.5L1072.5,1013.5L1073.5,1012.5L1074.5,1009.5L1075.5,1007.5L1076.5,1009.5L1077.5,1007.5L1078.5,1013.5H1079.5V1009.5H1081.5V1008.5H1082.5V1005.5H1085.5V1009.5L1086.5,1005.5L1087.5,1013.5L1088.5,1010.5H1089.5V1007.5H1091.5V1008.5L1092.5,1014.5L1093.5,1010.5L1094.5,1017.5H1095.5V1010.5H1097.5V1014.5L1098.5,1007.5L1099.5,1012.5L1100.5,1010.5H1101.5V1009.5H1103.5V1010.5H1105.5V1011.5L1106.5,1008.5H1107.5V1012.5H1110.5V1011.5L1111.5,1001.5L1112.5,1014.5L1113.5,1017.5H1114.5V1008.5H1116.5V1011.5L1117.5,1008.5L1118.5,1011.5L1119.5,1008.5L1120.5,1011.5L1121.5,1007.5H1122.5V1009.5H1124.5V1014.5L1125.5,1008.5H1126.5V1009.5H1129.5V1013.5L1130.5,1012.5L1131.5,1008.5L1132.5,1010.5L1133.5,1004.5H1134.5V1007.5H1136.5V1010.5L1137.5,1012.5L1138.5,1010.5L1139.5,1011.5L1140.5,1008.5L1141.5,1010.5L1142.5,1012.5L1143.5,1005.5L1144.5,1010.5L1145.5,1008.5L1146.5,1011.5L1147.5,1010.5L1148.5,1013.5L1149.5,1012.5L1150.5,1005.5L1151.5,1008.5L1152.5,1007.5L1153.5,1013.5L1154.5,1012.5L1155.5,1007.5L1156.5,1010.5L1157.5,1007.5L1158.5,1009.5L1159.5,1008.5L1160.5,1005.5L1161.5,1012.5H1162.5V1009.5H1164.5V1011.5L1165.5,1014.5L1166.5,1008.5L1167.5,1004.5L1168.5,1011.5L1169.5,1009.5L1170.5,1010.5L1171.5,1009.5L1172.5,1010.5L1173.5,1012.5L1174.5,1007.5L1175.5,1017.5L1176.5,1000.5L1177.5,1005.5L1178.5,1012.5H1179.5V1010.5H1181.5V1009.5H1183.5V1011.5L1184.5,1010.5L1185.5,1009.5L1186.5,1007.5L1187.5,1016.5L1188.5,1011.5L1189.5,1012.5L1190.5,1006.5L1191.5,1010.5H1192.5V1007.5H1194.5V1008.5H1196.5V1012.5L1197.5,1008.5H1198.5V1010.5H1200.5V1009.5L1201.5,1012.5H1202.5V1009.5H1206.5V1010.5L1207.5,1011.5L1208.5,1010.5L1209.5,1005.5L1210.5,1011.5L1211.5,1009.5L1212.5,1008.5L1213.5,1010.5L1214.5,1013.5H1215.5V1010.5H1217.5V1009.5L1218.5,1011.5L1219.5,1008.5L1220.5,1010.5L1221.5,1015.5L1222.5,1011.5L1223.5,1010.5L1224.5,1005.5L1225.5,1012.5L1226.5,1011.5L1227.5,1009.5H1228.5V1010.5H1230.5V1012.5L1231.5,1009.5L1232.5,1008.5L1233.5,1012.5L1234.5,1010.5L1235.5,1013.5L1236.5,1015.5L1237.5,1006.5L1238.5,1013.5H1239.5V1008.5H1241.5V1009.5H1243.5V1011.5L1244.5,1009.5L1245.5,1008.5L1246.5,1010.5L1247.5,1011.5L1248.5,1001.5L1249.5,1009.5L1250.5,1006.5L1251.5,1012.5H1252.5V1008.5H1254.5V1010.5L1255.5,1007.5L1256.5,1012.5L1257.5,1009.5L1258.5,1011.5L1259.5,1009.5L1260.5,1012.5L1261.5,1007.5L1262.5,1006.5L1263.5,1011.5L1264.5,1009.5L1265.5,1004.5L1266.5,1009.5L1267.5,1012.5L1268.5,1009.5L1269.5,1014.5L1270.5,1010.5L1271.5,1006.5L1272.5,1011.5L1273.5,1002.5L1274.5,1010.5L1275.5,1008.5L1276.5,1009.5L1277.5,1012.5L1278.5,1010.5L1279.5,1011.5L1280.5,1006.5L1281.5,1010.5L1282.5,1012.5L1283.5,1014.5L1284.5,1008.5L1285.5,1013.5L1286.5,1007.5L1287.5,1009.5H1288.5V1011.5H1291.5V1008.5L1292.5,1012.5L1293.5,1009.5L1294.5,1008.5L1295.5,1010.5L1296.5,1011.5L1297.5,1003.5L1298.5,1012.5L1299.5,1007.5L1300.5,1005.5L1301.5,1011.5L1302.5,1010.5L1303.5,1004.5L1304.5,1010.5L1305.5,1006.5L1306.5,1009.5L1307.5,1010.5L1308.5,1006.5L1309.5,1012.5L1310.5,1013.5L1311.5,1007.5L1312.5,1010.5L1313.5,1011.5H1314.5V1010.5H1316.5V1008.5L1317.5,1011.5L1318.5,1005.5L1319.5,1008.5L1320.5,1010.5L1321.5,1008.5L1322.5,1012.5L1323.5,1008.5H1324.5V1010.5H1326.5V1006.5L1327.5,1007.5H1328.5V1009.5H1330.5V1006.5L1331.5,1011.5L1332.5,1008.5L1333.5,1009.5L1334.5,1011.5H1335.5V1007.5H1337.5V1010.5H1339.5V1011.5L1340.5,1010.5L1341.5,1009.5L1342.5,1011.5L1343.5,1014.5L1344.5,1017.5L1345.5,1007.5L1346.5,1012.5L1347.5,1008.5L1348.5,1005.5L1349.5,1007.5L1350.5,1005.5L1351.5,1011.5H1352.5V1012.5H1354.5V1008.5L1355.5,1010.5L1356.5,1007.5L1357.5,1009.5L1358.5,1013.5L1359.5,1010.5L1360.5,1009.5L1361.5,1010.5L1362.5,1011.5L1363.5,1010.5H1364.5V1009.5H1367.5V1013.5L1368.5,1007.5L1369.5,1013.5L1370.5,1009.5L1371.5,1012.5L1372.5,1008.5L1373.5,1009.5L1374.5,1008.5L1375.5,1010.5H1376.5V1009.5H1378.5V1008.5L1379.5,1007.5H1380.5V1010.5H1382.5V1012.5L1383.5,1008.5L1384.5,1007.5L1385.5,1014.5L1386.5,1011.5L1387.5,1010.5L1388.5,1011.5L1389.5,1006.5L1390.5,1005.5L1391.5,1009.5L1392.5,1006.5L1393.5,1010.5L1394.5,1007.5L1395.5,1009.5L1396.5,1011.5L1397.5,1004.5L1398.5,1011.5L1399.5,1013.5L1400.5,1015.5L1401.5,1008.5H1402.5V1012.5H1404.5V1008.5H1405.5V1014.5H1407.5V1006.5L1408.5,1005.5L1409.5,1009.5L1410.5,1006.5H1411.5V1010.5H1413.5V1009.5L1414.5,1005.5L1415.5,1008.5L1416.5,1005.5L1417.5,1007.5L1418.5,1008.5L1419.5,1007.5L1420.5,1012.5L1421.5,1010.5L1422.5,1008.5L1423.5,1007.5L1424.5,1012.5L1425.5,1011.5L1426.5,1010.5L1427.5,1006.5H1428.5V1003.5H1430.5V1007.5L1431.5,1009.5L1432.5,1005.5L1433.5,1012.5L1434.5,1008.5L1435.5,1009.5L1436.5,1006.5L1437.5,1010.5L1438.5,1012.5H1439.5V1010.5H1441.5V1005.5L1442.5,1009.5L1443.5,1011.5H1444.5V1009.5H1446.5V1017.5L1447.5,1009.5L1448.5,1007.5L1449.5,1009.5L1450.5,1010.5L1451.5,1008.5L1452.5,1011.5L1453.5,1012.5L1454.5,1010.5L1455.5,1009.5L1456.5,1008.5L1457.5,1009.5L1458.5,1014.5L1459.5,1011.5L1460.5,1009.5L1461.5,1010.5L1462.5,1009.5L1463.5,1011.5L1464.5,1004.5L1465.5,1006.5L1466.5,1013.5L1467.5,1007.5H1468.5V1010.5H1470.5V1012.5L1471.5,1010.5" stroke="#fff" stroke-width="1"/><rect x="74.0" y="950.0" width="2" height="62.0" fill="#fff" stroke="none"/><rect x="113.0" y="949.0" width="1" height="63.0" fill="#fff" stroke="none"/><rect x="35.0" y="989.0" width="1" height="23.0" fill="#fff" stroke="none"/><rect x="25.0" y="997.0" width="1" height="15.0" fill="#fff" stroke="none"/><rect x="14.0" y="995.0" width="2" height="17.0" fill="#fff" stroke="none"/><rect x="150.0" y="990.0" width="1" height="22.0" fill="#fff" stroke="none"/><rect x="168.0" y="993.0" width="1" height="19.0" fill="#fff" stroke="none"/><rect x="177.0" y="995.0" width="1" height="17.0" fill="#fff" stroke="none"/><rect x="92.0" y="996.0" width="1" height="16.0" fill="#fff" stroke="none"/><rect x="95.0" y="966.0" width="1" height="46.0" fill="#fff" stroke="none"/><rect x="83.0" y="995.0" width="1" height="17.0" fill="#fff" stroke="none"/><rect x="864.0" y="973.0" width="1" height="39.0" fill="#fff" stroke="none"/><rect x="873.0" y="975.0" width="1" height="37.0" fill="#fff" stroke="none"/><rect x="835.0" y="995.0" width="1" height="17.0" fill="#fff" stroke="none"/><rect x="902.0" y="995.0" width="1" height="17.0" fill="#fff" stroke="none"/><rect x="906.0" y="1000.0" width="1" height="12.0" fill="#fff" stroke="none"/><rect x="915.0" y="1000.0" width="2" height="12.0" fill="#fff" stroke="none"/><rect x="820.0" y="1001.0" width="1" height="11.0" fill="#fff" stroke="none"/><rect x="94.0" y="761.0" width="1" height="71.0" fill="#fff" stroke="none"/><rect x="93.0" y="832.0" width="2" height="180.0" fill="#fff" stroke="none"/></g></svg>
<svg class="a" style="left:16px;top:735px" width="24" height="24" viewBox="0 0 24 24"><rect x="1" y="1" width="22" height="22" rx="3" fill="#000" stroke="#fff" stroke-width="1.7"/><g shape-rendering="crispEdges"><path d="M3,4.5H21M3,9.5H21M3,14.5H21M6.5,3V19M13.5,3V19M17.5,3V19M19.5,3V15" stroke="#8a8a8a" stroke-width="1"/><path d="M10.5,3V19M16.5,12V19M19.5,15V19" stroke="#00f400" stroke-width="1.2"/><path d="M3,21 V19 H4 V17 H5 V19 H6 V20 H7 V19 H9 V17.5 H12 V19 H14 V18 H15 V19 H16 V20 H17 V19 H21 V21 Z" fill="#00f400"/></g></svg>
<div class="t lg" style="left:56.5px;top:731px;color:#fff;font-size:12px;">Left channel</div>
<div class="t lg" style="left:56.5px;top:747px;color:#00ff00;font-size:12px;">Right channel</div>
<div class="t pl" style="left:1474.5px;top:724px;font-size:12px;">dB</div>
<div class="t pl" style="left:1474px;top:756.5px;font-size:12px;">-20</div>
<div class="t pl" style="left:1474px;top:776.5px;font-size:12px;">-30</div>
<div class="t pl" style="left:1474px;top:795.5px;font-size:12px;">-40</div>
<div class="t pl" style="left:1474px;top:815.5px;font-size:12px;">-50</div>
<div class="t pl" style="left:1474px;top:835.5px;font-size:12px;">-60</div>
<div class="t pl" style="left:1474px;top:854.5px;font-size:12px;">-70</div>
<div class="t pl" style="left:1474px;top:874.5px;font-size:12px;">-80</div>
<div class="t pl" style="left:1474px;top:893.5px;font-size:12px;">-90</div>
<div class="t pl" style="left:1474px;top:913.5px;font-size:12px;">-100</div>
<div class="t pl" style="left:1474px;top:933.5px;font-size:12px;">-110</div>
<div class="t pl" style="left:1474px;top:952.5px;font-size:12px;">-120</div>
<div class="t pl" style="left:1474px;top:972.5px;font-size:12px;">-130</div>
<div class="t pl" style="left:1474px;top:991.5px;font-size:12px;">-140</div>
<div class="tc pl" style="left:64.61px;width:60px;top:1020.7px;font-size:12px;">7000</div>
<div class="tc pl" style="left:213.81458078154128px;width:60px;top:1020.7px;font-size:12px;">8000</div>
<div class="tc pl" style="left:345.42234816028645px;width:60px;top:1020.7px;font-size:12px;">9000</div>
<div class="tc pl" style="left:463.1495077493193px;width:60px;top:1020.7px;font-size:12px;">10000</div>
<div class="tc pl" style="left:569.6466777586585px;width:60px;top:1020.7px;font-size:12px;">11000</div>
<div class="tc pl" style="left:666.8709766429507px;width:60px;top:1020.7px;font-size:12px;">12000</div>
<div class="tc pl" style="left:756.3086617319643px;width:60px;top:1020.7px;font-size:12px;">13000</div>
<div class="tc pl" style="left:839.115024344074px;width:60px;top:1020.7px;font-size:12px;">14000</div>
<div class="tc pl" style="left:916.2059036107288px;width:60px;top:1020.7px;font-size:12px;">15000</div>
<div class="tc pl" style="left:988.3196051256153px;width:60px;top:1020.7px;font-size:12px;">16000</div>
<div class="tc pl" style="left:1056.0600151174112px;width:60px;top:1020.7px;font-size:12px;">17000</div>
<div class="tc pl" style="left:1119.9273725043604px;width:60px;top:1020.7px;font-size:12px;">18000</div>
<div class="tc pl" style="left:1180.3407099608053px;width:60px;top:1020.7px;font-size:12px;">19000</div>
<div class="tc pl" style="left:1237.654532093393px;width:60px;top:1020.7px;font-size:12px;">20000</div>
<div class="tc pl" style="left:1292.1714202054834px;width:60px;top:1020.7px;font-size:12px;">21000</div>
<div class="tc pl" style="left:1344.1517021027323px;width:60px;top:1020.7px;font-size:12px;">22000</div>
<div class="tc pl" style="left:1393.820970647183px;width:60px;top:1020.7px;font-size:12px;">23000</div>
<div class="t pl" style="left:1473px;top:1020.7px;font-size:12px;">Hz</div>
</body></html>
